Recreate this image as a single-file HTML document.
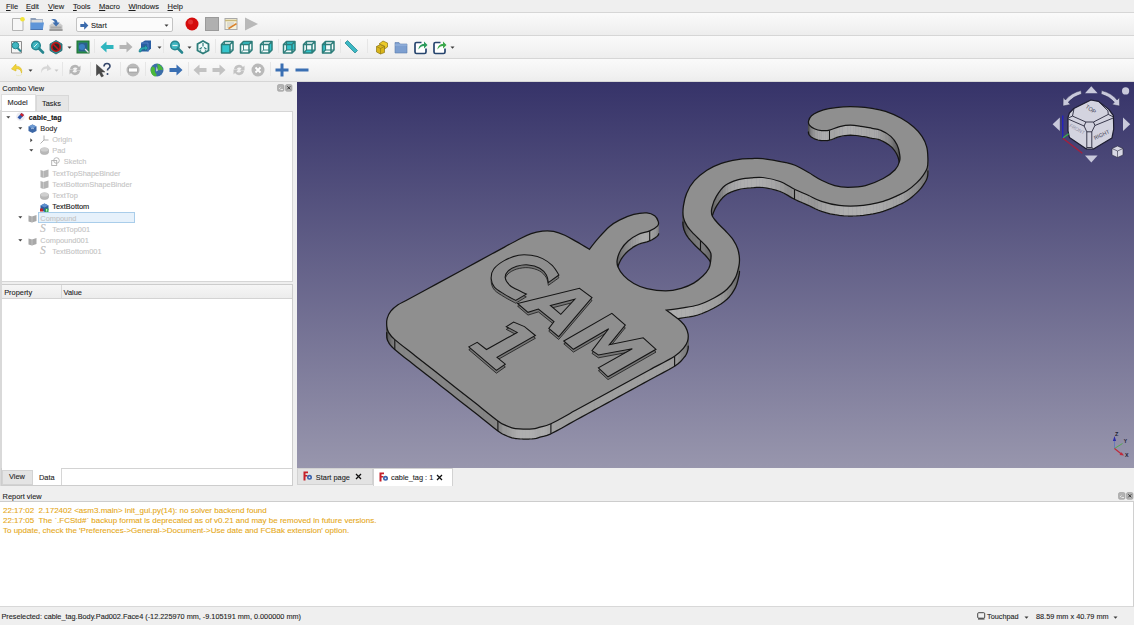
<!DOCTYPE html>
<html><head><meta charset="utf-8">
<style>
*{box-sizing:border-box;margin:0;padding:0}
html,body{width:1134px;height:625px;overflow:hidden;background:#efefef;font-family:"Liberation Sans",sans-serif;font-size:7.4px;color:#1e1e1e}
.a{position:absolute}
.t{position:absolute;white-space:pre;line-height:10px;-webkit-text-stroke:0.1px currentColor}
.u{text-decoration:underline;text-underline-offset:1.2px;text-decoration-thickness:0.6px}
svg{position:absolute;overflow:visible}
</style></head><body>

<div class="t" style="left:6px;top:1.8px;font-size:7.5px;color:#1e1e1e;font-weight:normal;"><span class="u">F</span>ile</div>
<div class="t" style="left:26px;top:1.8px;font-size:7.5px;color:#1e1e1e;font-weight:normal;"><span class="u">E</span>dit</div>
<div class="t" style="left:48px;top:1.8px;font-size:7.5px;color:#1e1e1e;font-weight:normal;"><span class="u">V</span>iew</div>
<div class="t" style="left:73px;top:1.8px;font-size:7.5px;color:#1e1e1e;font-weight:normal;"><span class="u">T</span>ools</div>
<div class="t" style="left:99px;top:1.8px;font-size:7.5px;color:#1e1e1e;font-weight:normal;"><span class="u">M</span>acro</div>
<div class="t" style="left:128.5px;top:1.8px;font-size:7.5px;color:#1e1e1e;font-weight:normal;"><span class="u">W</span>indows</div>
<div class="t" style="left:167.5px;top:1.8px;font-size:7.5px;color:#1e1e1e;font-weight:normal;"><span class="u">H</span>elp</div>
<div class="a" style="left:0px;top:13px;width:1134px;height:22px;background:linear-gradient(#fafafa,#f3f3f3 60%,#ededed)"></div>
<div class="a" style="left:0px;top:36px;width:1134px;height:22px;background:linear-gradient(#fafafa,#f3f3f3 60%,#ededed)"></div>
<div class="a" style="left:0px;top:59px;width:1134px;height:22px;background:linear-gradient(#fafafa,#f3f3f3 60%,#ededed)"></div>
<div class="a" style="left:0px;top:12px;width:1134px;height:1px;background:#d6d6d6"></div>
<div class="a" style="left:0px;top:35px;width:1134px;height:1px;background:#d6d6d6"></div>
<div class="a" style="left:0px;top:58px;width:1134px;height:1px;background:#d6d6d6"></div>
<div class="a" style="left:0px;top:81px;width:1134px;height:1px;background:#d6d6d6"></div>
<svg style="left:10.5px;top:17px" width="14" height="14" viewBox="0 0 14 14"><path d="M1.5,1.5h10.5v12h-10.5z" fill="#f7f7f7" stroke="#b4b4b4" stroke-width="1"/><circle cx="11.5" cy="2.3" r="2.3" fill="#f1e43a"/></svg>
<svg style="left:29.8px;top:17px" width="14" height="14" viewBox="0 0 14 14"><path d="M0.5,1h5l1,1.2h6.5v10.5h-12.5z" fill="#8e9fb8"/><path d="M1.5,3h11v3h-11z" fill="#dcdcdc"/><path d="M0.5,5.5h13.5l-1.2,7h-12.3z" fill="#5f95d8"/><path d="M0.5,12.5h12.3" stroke="#3d6aa8" stroke-width="0.8"/></svg>
<svg style="left:49px;top:17.5px" width="14" height="14" viewBox="0 0 14 14"><path d="M0.5,7.5l2,-2h9l2,2v5.5h-13z" fill="#c9c9c9"/><path d="M1.5,8.5h11v2h-11z" fill="#a9a9a9"/><path d="M0.5,11h13v2h-13z" fill="#9e9e9e"/><path d="M2,1.5c4,-1.5 6.5,0.5 6.5,3h2.2l-3.6,4l-3.6,-4h2.2c0,-1.5 -1.5,-2.5 -3.7,-3z" fill="#3f6fb0"/></svg>
<div class="a" style="left:76px;top:17px;width:97px;height:15px;background:#fbfbfb;border:1px solid #c3c3c3;border-radius:2px"></div>
<svg style="left:79.5px;top:20.5px" width="9" height="9" viewBox="0 0 14 14"><path d="M0.5,4.5h6v-4l6.5,6.5l-6.5,6.5v-4h-6z" fill="#3a6aab"/></svg>
<div class="t" style="left:91px;top:20.5px;font-size:7.5px;color:#1e1e1e;font-weight:normal;">Start</div>
<svg style="left:163.5px;top:23.5px" width="5" height="3" viewBox="0 0 5 3"><path d="M0.5,0.5h4l-2,2.3z" fill="#3b3b3b"/></svg>
<svg style="left:185px;top:17.3px" width="14" height="14" viewBox="0 0 14 14"><circle cx="7" cy="7" r="6.5" fill="#d40c0c"/><circle cx="5.5" cy="5" r="2.5" fill="#ee4a4a" opacity="0.6"/></svg>
<svg style="left:204.5px;top:17.3px" width="14" height="14" viewBox="0 0 14 14"><rect x="0.5" y="0.5" width="13" height="13" fill="#b0b0b0" stroke="#9a9a9a"/></svg>
<svg style="left:224px;top:17.3px" width="14" height="14" viewBox="0 0 14 14"><rect x="1" y="1.5" width="12" height="11" fill="#f6f2dc" stroke="#a9a9a9"/><path d="M1,3.5h12" stroke="#c9b87a" stroke-width="1.5"/><path d="M3,6h7M3,8h6M3,10h5" stroke="#bdbdbd" stroke-width="0.8"/><path d="M4,11l8,-5l1,1.2l-8,5z" fill="#d9822b"/></svg>
<svg style="left:244px;top:17.3px" width="14" height="14" viewBox="0 0 14 14"><path d="M1,0.5l13,6.5l-13,6.5z" fill="#b9b9b9"/></svg>
<svg style="left:10px;top:40px" width="14" height="14" viewBox="0 0 14 14"><path d="M1.5,1.5h10v11.5h-10z" fill="#f5f5f5" stroke="#8d8d8d" stroke-width="1"/><circle cx="5.5" cy="5.5" r="3.3" fill="#3fb6c1" stroke="#27868f" stroke-width="1"/><path d="M7.5,8l3.5,3.5" stroke="#27868f" stroke-width="2"/></svg>
<svg style="left:29.5px;top:40px" width="14" height="14" viewBox="0 0 14 14"><circle cx="6" cy="5.5" r="4.3" fill="#3fb6c1" stroke="#27868f" stroke-width="1.5"/><path d="M4,7l3.5,-3.5" stroke="#e0f4f4" stroke-width="1"/><path d="M9,8.5l4,4" stroke="#27868f" stroke-width="2.6" stroke-linecap="round"/></svg>
<svg style="left:49px;top:40px" width="14" height="14" viewBox="0 0 14 14"><path d="M7,0.5l6,3.5v6.5l-6,3.5l-6,-3.5v-6.5z" fill="#2f8c95" stroke="#1f5f66" stroke-width="0.8"/><circle cx="7" cy="7" r="4.2" fill="#2c2c2c" stroke="#c81414" stroke-width="1.6"/><path d="M4.3,4.3l5.4,5.4" stroke="#c81414" stroke-width="1.6"/></svg>
<svg style="left:67px;top:46px" width="5" height="3" viewBox="0 0 5 3"><path d="M0.5,0.5h4l-2,2.3z" fill="#3b3b3b"/></svg>
<svg style="left:76px;top:40px" width="14" height="14" viewBox="0 0 14 14"><rect x="1" y="1" width="12" height="12" fill="#2a9a4a" stroke="#1d6b34"/><rect x="2.5" y="2.5" width="9" height="9" fill="#2b5f8c"/><circle cx="6" cy="7" r="3" fill="#3a7fc0"/><path d="M9,9l3.5,3.5" stroke="#e8e8e8" stroke-width="1.2"/></svg>
<div class="a" style="left:94px;top:39px;width:1px;height:14px;background:#e6e6e6"></div>
<svg style="left:99.5px;top:40px" width="14" height="14" viewBox="0 0 14 14"><path d="M0.5,7l6,-5.5v3.5h7v4h-7v3.5z" fill="#2fb5be"/></svg>
<svg style="left:119px;top:40px" width="14" height="14" viewBox="0 0 14 14"><path d="M13.5,7l-6,-5.5v3.5h-7v4h7v3.5z" fill="#b5b5b5"/></svg>
<svg style="left:138px;top:40px" width="14" height="14" viewBox="0 0 14 14"><path d="M3,3l4,-2.5h6v8l-3,3h-7z" fill="#2a5ea3"/><path d="M3,3h7v9" fill="none" stroke="#5a8ccc" stroke-width="0.8"/><path d="M1,12c0,-4 3,-5 6,-5v-2l3,3l-3,3v-2c-2,0 -4,1 -4,3z" fill="#2aa4b0" stroke="#16707a" stroke-width="0.5"/></svg>
<svg style="left:156.5px;top:46px" width="5" height="3" viewBox="0 0 5 3"><path d="M0.5,0.5h4l-2,2.3z" fill="#3b3b3b"/></svg>
<div class="a" style="left:163px;top:39px;width:1px;height:14px;background:#e6e6e6"></div>
<svg style="left:169px;top:40px" width="14" height="14" viewBox="0 0 14 14"><circle cx="6" cy="5.5" r="4.3" fill="#3fb6c1" stroke="#27868f" stroke-width="1.5"/><path d="M3.5,5.5h5" stroke="#e0f4f4" stroke-width="1.2"/><path d="M9,8.5l4,4" stroke="#27868f" stroke-width="2.6" stroke-linecap="round"/></svg>
<svg style="left:186.5px;top:46px" width="5" height="3" viewBox="0 0 5 3"><path d="M0.5,0.5h4l-2,2.3z" fill="#3b3b3b"/></svg>
<svg style="left:196px;top:40px" width="14" height="14" viewBox="0 0 14 14"><path d="M7,1l5.5,3v6.5l-5.5,3l-5.5,-3v-6.5z" fill="#f2fbfb" stroke="#2d7d7a" stroke-width="1.8"/><path d="M7,3v3.5M3.5,9l2.5,-1.5M10.5,9l-2.5,-1.5" stroke="#2d7d7a" stroke-width="1.2"/><path d="M4,10.5l1.2,-0.6M10,10.5l-1.2,-0.6" stroke="#2d7d7a" stroke-width="1"/></svg>
<div class="a" style="left:215px;top:39px;width:1px;height:14px;background:#e6e6e6"></div>
<svg style="left:219.5px;top:40px" width="14" height="14" viewBox="0 0 14 14"><path d="M1.5,4.5l3,-3h8.5v8.5l-3,3h-8.5z" fill="#f2fbfb"/><path d="M4.5,1.5v8.5h8.5M4.5,10l-3,3" fill="none" stroke="#2d7d7a" stroke-width="0.9"/><path d="M1.5,4.5h8.5v8.5h-8.5z" fill="#35c5cc"/><path d="M1.5,4.5l3,-3h8.5v8.5l-3,3h-8.5z M1.5,4.5h8.5v8.5M10,4.5l3,-3" fill="none" stroke="#2d7d7a" stroke-width="1.5" stroke-linejoin="round"/></svg>
<svg style="left:239px;top:40px" width="14" height="14" viewBox="0 0 14 14"><path d="M1.5,4.5l3,-3h8.5v8.5l-3,3h-8.5z" fill="#f2fbfb"/><path d="M4.5,1.5v8.5h8.5M4.5,10l-3,3" fill="none" stroke="#2d7d7a" stroke-width="0.9"/><path d="M1.5,4.5l3,-3h8.5l-3,3z" fill="#35c5cc"/><path d="M1.5,4.5l3,-3h8.5v8.5l-3,3h-8.5z M1.5,4.5h8.5v8.5M10,4.5l3,-3" fill="none" stroke="#2d7d7a" stroke-width="1.5" stroke-linejoin="round"/></svg>
<svg style="left:258.5px;top:40px" width="14" height="14" viewBox="0 0 14 14"><path d="M1.5,4.5l3,-3h8.5v8.5l-3,3h-8.5z" fill="#f2fbfb"/><path d="M4.5,1.5v8.5h8.5M4.5,10l-3,3" fill="none" stroke="#2d7d7a" stroke-width="0.9"/><path d="M10,4.5l3,-3v8.5l-3,3z" fill="#35c5cc"/><path d="M1.5,4.5l3,-3h8.5v8.5l-3,3h-8.5z M1.5,4.5h8.5v8.5M10,4.5l3,-3" fill="none" stroke="#2d7d7a" stroke-width="1.5" stroke-linejoin="round"/></svg>
<div class="a" style="left:278px;top:39px;width:1px;height:14px;background:#e6e6e6"></div>
<svg style="left:282px;top:40px" width="14" height="14" viewBox="0 0 14 14"><path d="M1.5,4.5l3,-3h8.5v8.5l-3,3h-8.5z" fill="#f2fbfb"/><path d="M4.5,1.5h8.5v8.5h-8.5z" fill="#35c5cc"/><path d="M4.5,1.5v8.5h8.5M4.5,10l-3,3" fill="none" stroke="#2d7d7a" stroke-width="1.2"/><path d="M1.5,4.5l3,-3h8.5v8.5l-3,3h-8.5z M1.5,4.5h8.5v8.5M10,4.5l3,-3" fill="none" stroke="#2d7d7a" stroke-width="1.5" stroke-linejoin="round"/></svg>
<svg style="left:301.5px;top:40px" width="14" height="14" viewBox="0 0 14 14"><path d="M1.5,4.5l3,-3h8.5v8.5l-3,3h-8.5z" fill="#f2fbfb"/><path d="M1.5,13l3,-3h8.5l-3,3z" fill="#35c5cc"/><path d="M4.5,1.5v8.5h8.5M4.5,10l-3,3" fill="none" stroke="#2d7d7a" stroke-width="1.2"/><path d="M1.5,4.5l3,-3h8.5v8.5l-3,3h-8.5z M1.5,4.5h8.5v8.5M10,4.5l3,-3" fill="none" stroke="#2d7d7a" stroke-width="1.5" stroke-linejoin="round"/></svg>
<svg style="left:321px;top:40px" width="14" height="14" viewBox="0 0 14 14"><path d="M1.5,4.5l3,-3h8.5v8.5l-3,3h-8.5z" fill="#f2fbfb"/><path d="M1.5,4.5l3,-3v8.5l-3,3z" fill="#35c5cc"/><path d="M4.5,1.5v8.5h8.5M4.5,10l-3,3" fill="none" stroke="#2d7d7a" stroke-width="1.2"/><path d="M1.5,4.5l3,-3h8.5v8.5l-3,3h-8.5z M1.5,4.5h8.5v8.5M10,4.5l3,-3" fill="none" stroke="#2d7d7a" stroke-width="1.5" stroke-linejoin="round"/></svg>
<div class="a" style="left:340px;top:39px;width:1px;height:14px;background:#e6e6e6"></div>
<svg style="left:344px;top:40px" width="14" height="14" viewBox="0 0 14 14"><path d="M1,3l2.5,-2.5l10,10l-2.5,2.5z" fill="#3cb8c4" stroke="#2a8a94" stroke-width="0.8"/></svg>
<div class="a" style="left:367px;top:39px;width:1px;height:14px;background:#e6e6e6"></div>
<svg style="left:374.5px;top:40px" width="14" height="14" viewBox="0 0 14 14"><path d="M1.5,6.5l4,-2l4,2v6l-4,1.5l-4,-2z" fill="#d9b51a" stroke="#8c7514" stroke-width="0.7"/><path d="M4,4l4,-3l4.5,2v4l-3,2v-3z" fill="#eccb2a" stroke="#8c7514" stroke-width="0.7"/><path d="M1.5,6.5l4,2l4,-2M5.5,8.5v5.5" fill="none" stroke="#8c7514" stroke-width="0.6"/></svg>
<svg style="left:393.5px;top:40px" width="14" height="14" viewBox="0 0 14 14"><path d="M1,2.5h4l1,1.5h7v9h-12z" fill="#7d9fd0" stroke="#5c7cad" stroke-width="0.6"/><path d="M1,5h12" stroke="#a6c0e4" stroke-width="0.8"/></svg>
<svg style="left:413.5px;top:40px" width="14" height="14" viewBox="0 0 14 14"><path d="M7.5,2.5h-5a1.5,1.5 0 0 0 -1.5,1.5v8a1.5,1.5 0 0 0 1.5,1.5h8a1.5,1.5 0 0 0 1.5,-1.5v-3.5" fill="#ffffff" stroke="#27456e" stroke-width="1.7"/><path d="M4.5,9.5c0,-3 2,-5.5 5.5,-5.5v-2.5l3.5,3.5l-3.5,3.5v-2.5c-2,0 -4,1 -5.5,3.5z" fill="#2a9a5a"/></svg>
<svg style="left:433px;top:40px" width="14" height="14" viewBox="0 0 14 14"><path d="M7.5,2.5h-5a1.5,1.5 0 0 0 -1.5,1.5v8a1.5,1.5 0 0 0 1.5,1.5h8a1.5,1.5 0 0 0 1.5,-1.5v-3.5" fill="#ffffff" stroke="#27456e" stroke-width="1.7"/><path d="M4.5,9.5c0,-3 2,-5.5 5.5,-5.5v-2.5l3.5,3.5l-3.5,3.5v-2.5c-2,0 -4,1 -5.5,3.5z" fill="#3aa84a"/></svg>
<svg style="left:450px;top:46px" width="5" height="3" viewBox="0 0 5 3"><path d="M0.5,0.5h4l-2,2.3z" fill="#3b3b3b"/></svg>
<svg style="left:10.5px;top:63px" width="14" height="14" viewBox="0 0 14 14"><path d="M4,2l-3.5,4l4.5,2v-2.3c3,0 5,1 5.5,4.5c1,-4 -1,-7 -5.5,-7v-2z" fill="#f1d33a" stroke="#d9b820" stroke-width="0.6"/><path d="M5,12c2,1 5,1 6,-1" stroke="#e9e9c9" stroke-width="1" fill="none"/></svg>
<svg style="left:27.5px;top:69px" width="5" height="3" viewBox="0 0 5 3"><path d="M0.5,0.5h4l-2,2.3z" fill="#3b3b3b"/></svg>
<svg style="left:37.5px;top:63px" width="14" height="14" viewBox="0 0 14 14"><path d="M10,2l3.5,4l-4.5,2v-2.3c-3,0 -5,1 -5.5,4.5c-1,-4 1,-7 5.5,-7v-2z" fill="#d6d6d6"/></svg>
<svg style="left:54px;top:69px" width="5" height="3" viewBox="0 0 5 3"><path d="M0.5,0.5h4l-2,2.3z" fill="#c8c8c8"/></svg>
<div class="a" style="left:62px;top:62px;width:1px;height:14px;background:#e6e6e6"></div>
<svg style="left:67.5px;top:63px" width="14" height="14" viewBox="0 0 14 14"><path d="M2,6a5,5 0 0 1 9,-2l1.5,-1.5v5h-5l2,-2a3,3 0 0 0 -5,1z" fill="#b5b5b5"/><path d="M12,8a5,5 0 0 1 -9,2l-1.5,1.5v-5h5l-2,2a3,3 0 0 0 5,-1z" fill="#b5b5b5"/></svg>
<div class="a" style="left:90px;top:62px;width:1px;height:14px;background:#e6e6e6"></div>
<svg style="left:96px;top:63px" width="14" height="14" viewBox="0 0 14 14"><path d="M0.5,1.5l0,11l2.8,-2.5l2.2,4l2,-1l-2.2,-4h3.6z" fill="#4a4a4a" stroke="#3a3a3a" stroke-width="0.5"/><path d="M8,3.5c0,-2 1.5,-3 3,-3s3,1 3,2.8c0,1.5 -1.2,2 -2,2.6c-0.5,0.4 -0.5,0.8 -0.5,1.6" fill="none" stroke="#34466a" stroke-width="1.6"/><circle cx="11.5" cy="11" r="1" fill="#34466a"/></svg>
<div class="a" style="left:120px;top:62px;width:1px;height:14px;background:#e6e6e6"></div>
<svg style="left:125.5px;top:63px" width="14" height="14" viewBox="0 0 14 14"><circle cx="7" cy="7" r="6.5" fill="#b9b9b9"/><rect x="2.5" y="5" width="9" height="4" fill="#ffffff" stroke="#8c8c8c" stroke-width="0.6"/></svg>
<div class="a" style="left:145px;top:62px;width:1px;height:14px;background:#e6e6e6"></div>
<svg style="left:149.5px;top:63px" width="14" height="14" viewBox="0 0 14 14"><circle cx="7" cy="7" r="6.5" fill="#3c6ea8"/><path d="M2,3.5c2,0 3.5,1.5 3,3.5c-0.5,1.5 0.5,3 1.5,4c0.5,1 -0.5,2.5 -1.5,2.5c-3,-1 -5,-4.5 -4,-8zM7,0.8c3,0.5 5.5,3 6,6c-1,0.5 -2,-0.5 -3,0c-1,1 -2.5,0.5 -2.5,-1c0,-1.5 0.5,-2.5 -0.5,-5z" fill="#4ab83a"/><path d="M6.5,3.5l1.5,4l-2,1z" fill="#e8f0e8" opacity="0.8"/></svg>
<svg style="left:169px;top:63px" width="14" height="14" viewBox="0 0 14 14"><path d="M13.5,7l-6,-5.5v3.5h-7v4h7v3.5z" fill="#3a6fb3"/></svg>
<div class="a" style="left:188px;top:62px;width:1px;height:14px;background:#e6e6e6"></div>
<svg style="left:192.5px;top:63px" width="14" height="14" viewBox="0 0 14 14"><path d="M0.5,7l6,-5.5v3.5h7v4h-7v3.5z" fill="#c2c2c2"/></svg>
<svg style="left:211.5px;top:63px" width="14" height="14" viewBox="0 0 14 14"><path d="M13.5,7l-6,-5.5v3.5h-7v4h7v3.5z" fill="#c2c2c2"/></svg>
<svg style="left:231.5px;top:63px" width="14" height="14" viewBox="0 0 14 14"><path d="M2,6a5,5 0 0 1 9,-2l1.5,-1.5v5h-5l2,-2a3,3 0 0 0 -5,1z" fill="#c2c2c2"/><path d="M12,8a5,5 0 0 1 -9,2l-1.5,1.5v-5h5l-2,2a3,3 0 0 0 5,-1z" fill="#c2c2c2"/></svg>
<svg style="left:251px;top:63px" width="14" height="14" viewBox="0 0 14 14"><circle cx="7" cy="7" r="6.5" fill="#b9b9b9"/><path d="M4.5,4.5l5,5M9.5,4.5l-5,5" stroke="#ffffff" stroke-width="1.8"/></svg>
<div class="a" style="left:270px;top:62px;width:1px;height:14px;background:#e6e6e6"></div>
<svg style="left:274.5px;top:63px" width="14" height="14" viewBox="0 0 14 14"><path d="M5.5,0.5h3v5h5v3h-5v5h-3v-5h-5v-3h5z" fill="#3a6fb3"/></svg>
<svg style="left:294.5px;top:63px" width="14" height="14" viewBox="0 0 14 14"><path d="M0.5,5.5h13v3h-13z" fill="#3a6fb3"/></svg>
<div class="t" style="left:2.3px;top:83.6px;font-size:7.4px;color:#1e1e1e;font-weight:normal;">Combo View</div>
<svg style="left:277px;top:84px" width="16" height="8" viewBox="0 0 16 8"><rect x="0.5" y="0.5" width="6.5" height="6.8" rx="1.5" fill="#b3b3b3" stroke="#9c9c9c" stroke-width="0.6"/><path d="M2,5l1.5,-1.5M3.5,5.5h2.5" stroke="#f4f4f4" stroke-width="0.8" fill="none"/><rect x="8.5" y="0.5" width="6.5" height="6.8" rx="1.5" fill="#b3b3b3" stroke="#9c9c9c" stroke-width="0.6"/><path d="M10.3,2.3l3,3M13.3,2.3l-3,3" stroke="#2a2a2a" stroke-width="0.9"/></svg>
<div class="a" style="left:1px;top:110.5px;width:292px;height:171.5px;background:#fff;border:1px solid #d6d6d6"></div>
<div class="a" style="left:35.5px;top:95px;width:33px;height:16px;background:#e6e6e6;border:1px solid #d8d8d8;border-bottom:none"></div>
<div class="a" style="left:1px;top:93.8px;width:34.5px;height:17.2px;background:#fff;border:1px solid #dedede;border-bottom:none"></div>
<div class="t" style="left:7.5px;top:98.1px;font-size:7.4px;color:#1e1e1e;font-weight:normal;">Model</div>
<div class="t" style="left:42px;top:98.6px;font-size:7.4px;color:#1e1e1e;font-weight:normal;">Tasks</div>
<svg style="left:5.8px;top:115.5px" width="5" height="3" viewBox="0 0 5 3"><path d="M0.3,0.3h4l-2,2.2z" fill="#404040"/></svg>
<svg style="left:16px;top:112px" width="9" height="9" viewBox="0 0 9 9"><circle cx="4.5" cy="4.5" r="4.3" fill="#ececf2"/><path d="M5.5,1l2.5,2l-4,4.5l-2.5,-2z" fill="#2f56a8"/><path d="M5.5,1l2.5,2l-1.5,1.7l-2.5,-2z" fill="#d2242a"/></svg>
<div class="t" style="left:28.8px;top:113.0px;font-size:7.1px;color:#111;font-weight:bold;">cable_tag</div>
<svg style="left:17.5px;top:126.5px" width="5" height="3" viewBox="0 0 5 3"><path d="M0.3,0.3h4l-2,2.2z" fill="#404040"/></svg>
<svg style="left:28px;top:123.5px" width="9" height="9" viewBox="0 0 9 9"><path d="M4.5,0.5l4,2v4.5l-4,2l-4,-2v-4.5z" fill="#3c67a6"/><path d="M4.5,0.5l4,2l-4,2l-4,-2z" fill="#6e9ad2"/><path d="M3,5c1,-1 2,-1 3,0" stroke="#c9daf0" stroke-width="0.8" fill="none"/></svg>
<div class="t" style="left:40.3px;top:123.7px;font-size:7.4px;color:#1e1e1e;font-weight:normal;">Body</div>
<svg style="left:30px;top:137.5px" width="3" height="5" viewBox="0 0 3 5"><path d="M0.3,0.3v4l2.2,-2z" fill="#404040"/></svg>
<svg style="left:39.5px;top:134.5px" width="9" height="9" viewBox="0 0 9 9"><path d="M4,0.5v4.5l-3.5,3.5M4,5h4.5" stroke="#a8a8a8" stroke-width="0.9" fill="none"/></svg>
<div class="t" style="left:52.3px;top:134.9px;font-size:7.4px;color:#c3c3c3;font-weight:normal;">Origin</div>
<svg style="left:29.3px;top:149px" width="5" height="3" viewBox="0 0 5 3"><path d="M0.3,0.3h4l-2,2.2z" fill="#404040"/></svg>
<svg style="left:39.5px;top:147px" width="9" height="8" viewBox="0 0 9 8"><ellipse cx="4.5" cy="2.5" rx="4" ry="2" fill="#b8b8b8"/><path d="M0.5,2.5v3c0,1.2 1.8,2 4,2s4,-0.8 4,-2v-3" fill="#b8b8b8" stroke="#9c9c9c" stroke-width="0.5"/><ellipse cx="4.5" cy="2.5" rx="4" ry="2" fill="#cfcfcf"/></svg>
<div class="t" style="left:52.3px;top:146.1px;font-size:7.4px;color:#c3c3c3;font-weight:normal;">Pad</div>
<svg style="left:51px;top:157px" width="9" height="9" viewBox="0 0 9 9"><rect x="0.7" y="3.5" width="5" height="5" fill="none" stroke="#b0b0b0" stroke-width="0.9"/><circle cx="5.5" cy="3.5" r="2.8" fill="none" stroke="#b0b0b0" stroke-width="0.9"/></svg>
<div class="t" style="left:63.8px;top:157.4px;font-size:7.4px;color:#c3c3c3;font-weight:normal;">Sketch</div>
<svg style="left:39.5px;top:168.5px" width="9" height="9" viewBox="0 0 9 9"><path d="M0.5,1l3,1l5,-1.5v7l-5,1.5l-3,-1z" fill="#b4b4b4"/><path d="M3.5,2v7" stroke="#d8d8d8" stroke-width="0.6"/></svg>
<div class="t" style="left:52.3px;top:168.6px;font-size:7.4px;color:#c3c3c3;font-weight:normal;">TextTopShapeBinder</div>
<svg style="left:39.5px;top:179.8px" width="9" height="9" viewBox="0 0 9 9"><path d="M0.5,1l3,1l5,-1.5v7l-5,1.5l-3,-1z" fill="#b4b4b4"/><path d="M3.5,2v7" stroke="#d8d8d8" stroke-width="0.6"/></svg>
<div class="t" style="left:52.3px;top:179.9px;font-size:7.4px;color:#c3c3c3;font-weight:normal;">TextBottomShapeBinder</div>
<svg style="left:39.5px;top:192px" width="9" height="8" viewBox="0 0 9 8"><ellipse cx="4.5" cy="2.5" rx="4" ry="2" fill="#b8b8b8"/><path d="M0.5,2.5v3c0,1.2 1.8,2 4,2s4,-0.8 4,-2v-3" fill="#b8b8b8" stroke="#9c9c9c" stroke-width="0.5"/><ellipse cx="4.5" cy="2.5" rx="4" ry="2" fill="#cfcfcf"/></svg>
<div class="t" style="left:52.3px;top:191.1px;font-size:7.4px;color:#c3c3c3;font-weight:normal;">TextTop</div>
<svg style="left:39.5px;top:202.5px" width="9" height="9" viewBox="0 0 9 9"><path d="M4.5,0.5l4,2v4.5l-4,2l-4,-2v-4.5z" fill="#2f5f9e"/><path d="M4.5,0.5l4,2l-4,2l-4,-2z" fill="#5d8fcf"/><rect x="0" y="5.5" width="3" height="3" fill="#c0272d"/><path d="M5,5.5h3.5v3.5h-3.5z" fill="#2fa84a"/><path d="M6.7,6v2.5" stroke="#fff" stroke-width="0.8"/></svg>
<div class="t" style="left:52.3px;top:202.4px;font-size:7.4px;color:#111;font-weight:normal;">TextBottom</div>
<svg style="left:17.5px;top:216.3px" width="5" height="3" viewBox="0 0 5 3"><path d="M0.3,0.3h4l-2,2.2z" fill="#404040"/></svg>
<svg style="left:28px;top:214px" width="9" height="8" viewBox="0 0 9 8"><path d="M0.5,1.5l3.5,1l4.5,-1.5v6l-4.5,1.5l-3.5,-1z" fill="#a8a8a8"/><path d="M4,2.5v6" stroke="#d0d0d0" stroke-width="0.6"/></svg>
<div class="a" style="left:38.3px;top:212.4px;width:97px;height:11px;background:#e6f1fb;border:1px solid #a9cdea"></div>
<div class="t" style="left:40.3px;top:213.6px;font-size:7.4px;color:#c3c3c3;font-weight:normal;">Compound</div>
<div class="t" style="left:40px;top:222.9px;font-size:11.5px;color:#bdbdbd;font-weight:normal;font-family:'Liberation Serif';font-style:italic">S</div>
<div class="t" style="left:52.3px;top:224.9px;font-size:7.4px;color:#c3c3c3;font-weight:normal;">TextTop001</div>
<svg style="left:17.5px;top:238.8px" width="5" height="3" viewBox="0 0 5 3"><path d="M0.3,0.3h4l-2,2.2z" fill="#404040"/></svg>
<svg style="left:28px;top:236.5px" width="9" height="8" viewBox="0 0 9 8"><path d="M0.5,1.5l3.5,1l4.5,-1.5v6l-4.5,1.5l-3.5,-1z" fill="#a8a8a8"/><path d="M4,2.5v6" stroke="#d0d0d0" stroke-width="0.6"/></svg>
<div class="t" style="left:40.3px;top:236.1px;font-size:7.4px;color:#c3c3c3;font-weight:normal;">Compound001</div>
<div class="t" style="left:40px;top:245.4px;font-size:11.5px;color:#bdbdbd;font-weight:normal;font-family:'Liberation Serif';font-style:italic">S</div>
<div class="t" style="left:52.3px;top:247.4px;font-size:7.4px;color:#c3c3c3;font-weight:normal;">TextBottom001</div>
<div class="a" style="left:1px;top:283.5px;width:292px;height:185px;background:#fff;border:1px solid #cdcdcd"></div>
<div class="a" style="left:2px;top:284.5px;width:290px;height:14px;background:linear-gradient(#f6f6f6,#ececec);border-bottom:1px solid #d3d3d3"></div>
<div class="a" style="left:61px;top:285px;width:1px;height:13px;background:#d9d9d9"></div>
<div class="a" style="left:0px;top:110px;width:2px;height:376px;background:#d9d9d9"></div>
<div class="t" style="left:4.2px;top:288.1px;font-size:7.4px;color:#1e1e1e;font-weight:normal;">Property</div>
<div class="t" style="left:63.5px;top:288.1px;font-size:7.4px;color:#1e1e1e;font-weight:normal;">Value</div>
<div class="a" style="left:1px;top:468px;width:292px;height:18px;background:#fff;border:1px solid #cdcdcd;border-top:none"></div>
<div class="a" style="left:1.5px;top:469.5px;width:31px;height:15px;background:#e4e4e4;border:1px solid #d3d3d3"></div>
<div class="a" style="left:60.8px;top:468.5px;width:1px;height:16px;background:#d6d6d6"></div>
<div class="a" style="left:61px;top:467.5px;width:231px;height:1px;background:#d3d3d3"></div>
<div class="t" style="left:9px;top:472.1px;font-size:7.4px;color:#1e1e1e;font-weight:normal;">View</div>
<div class="t" style="left:39px;top:473.1px;font-size:7.4px;color:#1e1e1e;font-weight:normal;">Data</div>
<div class="a" style="left:297px;top:82px;width:837px;height:386px;background:linear-gradient(#363369,#9896ad)"></div>
<svg width="1134" height="625" style="left:0;top:0;position:absolute" viewBox="0 0 1134 625">
<defs><path id="ol" d="M386.8,326.4 C386.6,324.1 386.5,320.9 387.2,318.4 C387.9,315.9 389.0,313.5 390.8,311.2 C392.6,308.9 395.1,306.8 398.0,304.8 C400.9,302.8 402.0,302.7 408.4,299.3 C414.8,295.9 427.0,289.2 436.3,284.1 C445.6,279.1 454.9,274.1 464.2,269.0 C473.5,263.9 482.8,258.9 492.1,253.8 C501.4,248.8 513.5,242.1 520.0,238.7 C526.5,235.3 527.5,234.9 531.2,233.6 C534.9,232.3 538.7,231.5 542.4,231.1 C546.1,230.7 549.9,230.7 553.6,231.4 C557.3,232.1 561.1,233.6 564.8,235.3 C568.5,237.0 571.9,239.1 576.0,241.4 C580.1,243.7 589.4,249.3 589.4,249.3 C589.4,249.3 595.0,241.9 598.4,238.1 C601.8,234.3 606.1,229.5 609.6,226.5 C613.1,223.5 615.4,222.1 619.4,220.1 C623.4,218.1 629.2,215.6 633.8,214.4 C638.4,213.2 643.3,212.7 646.8,212.9 C650.3,213.1 652.8,214.4 654.7,215.8 C656.6,217.2 657.8,219.9 658.3,221.6 C658.8,223.3 659.0,224.3 657.6,225.9 C656.2,227.5 653.0,229.5 649.7,230.9 C646.5,232.3 641.7,232.8 638.1,234.5 C634.5,236.2 631.0,238.5 628.1,241.0 C625.2,243.5 622.7,246.6 620.9,249.7 C619.1,252.8 617.7,256.9 617.2,259.8 C616.7,262.7 616.9,264.4 618.0,267.0 C619.1,269.6 621.1,272.9 623.7,275.6 C626.3,278.4 629.9,281.3 633.8,283.5 C637.6,285.7 641.5,287.4 646.8,288.6 C652.1,289.8 659.9,290.9 665.6,290.9 C671.3,290.8 676.5,289.6 681.2,288.3 C685.9,287.0 690.1,285.2 693.7,283.1 C697.4,281.0 700.6,278.2 703.1,275.8 C705.6,273.4 707.5,270.9 708.8,268.5 C710.0,266.1 710.3,264.1 710.6,261.5 C710.9,258.9 711.5,255.7 710.8,253.2 C710.1,250.7 708.1,248.6 706.4,246.5 C704.7,244.4 702.9,243.0 700.8,240.9 C698.7,238.8 696.2,236.6 694.0,234.2 C691.8,231.8 689.1,229.2 687.3,226.4 C685.5,223.6 684.0,220.8 683.4,217.4 C682.8,214.0 682.8,210.2 683.4,206.2 C684.0,202.2 684.9,197.4 686.7,193.2 C688.5,188.9 691.0,184.5 694.4,180.7 C697.8,176.9 702.4,173.1 706.9,170.2 C711.4,167.3 716.2,165.2 721.3,163.4 C726.4,161.6 732.5,160.4 737.6,159.6 C742.7,158.8 747.8,158.8 752.0,158.6 C756.2,158.4 757.2,157.9 762.9,158.6 C768.5,159.3 780.5,161.5 785.9,162.6 C791.2,163.7 791.3,163.7 795.0,165.3 C798.7,166.9 803.8,169.8 808.2,172.3 C812.6,174.8 817.1,178.1 821.5,180.3 C825.9,182.5 830.3,184.4 834.7,185.6 C839.1,186.8 842.8,187.3 847.9,187.3 C853.0,187.3 859.6,187.1 865.5,185.6 C871.4,184.1 878.3,181.1 883.2,178.5 C888.1,175.9 892.4,172.7 895.1,169.8 C897.8,166.9 898.9,163.7 899.6,161.1 C900.4,158.5 900.0,156.8 899.6,154.1 C899.2,151.4 898.5,147.6 897.0,144.7 C895.5,141.8 893.6,138.8 890.8,136.4 C888.0,134.0 883.5,131.5 880.4,130.2 C877.3,128.8 875.2,129.0 872.0,128.3 C868.8,127.7 864.8,126.8 861.2,126.3 C857.6,125.8 854.0,125.2 850.4,125.2 C846.8,125.2 843.1,125.8 839.6,126.6 C836.1,127.4 832.5,129.5 829.5,130.2 C826.5,130.9 824.1,130.8 821.6,130.6 C819.1,130.4 816.4,129.7 814.4,128.8 C812.4,127.9 810.4,126.5 809.4,125.2 C808.4,123.9 808.2,122.5 808.6,120.9 C809.0,119.3 809.9,117.3 811.5,115.8 C813.1,114.3 815.1,113.1 818.0,111.9 C820.9,110.7 824.6,109.4 828.8,108.6 C833.0,107.8 838.4,107.1 843.2,106.8 C848.0,106.5 852.8,106.5 857.6,106.8 C862.4,107.0 867.3,107.5 872.0,108.3 C876.7,109.1 880.7,109.8 885.6,111.4 C890.5,113.1 896.5,115.6 901.2,118.2 C905.9,120.8 910.2,124.0 913.7,127.0 C917.2,130.0 919.8,133.1 922.0,136.4 C924.2,139.7 925.7,143.2 926.7,146.8 C927.7,150.4 927.8,154.7 927.9,158.2 C928.0,161.7 928.1,165.0 927.2,167.9 C926.4,170.8 924.6,173.3 922.8,175.8 C921.0,178.3 919.2,180.4 916.6,182.9 C914.0,185.4 910.3,188.6 906.9,190.8 C903.5,193.0 900.3,194.3 896.4,196.1 C892.5,197.8 887.6,199.9 883.2,201.3 C878.8,202.7 874.4,203.6 870.0,204.4 C865.6,205.2 861.9,205.7 856.7,205.9 C851.6,206.1 845.0,206.2 839.1,205.4 C833.2,204.7 826.6,203.1 821.5,201.4 C816.4,199.7 812.6,197.3 808.2,195.3 C803.8,193.3 799.7,191.8 795.0,189.5 C790.3,187.2 785.5,183.5 780.1,181.5 C774.8,179.5 767.7,178.1 762.9,177.5 C758.1,176.9 755.3,177.5 751.1,177.9 C746.9,178.3 741.9,178.5 737.6,179.8 C733.3,181.1 728.6,182.8 725.1,185.5 C721.6,188.2 718.7,192.5 716.5,196.1 C714.3,199.7 712.8,204.1 712.0,207.3 C711.2,210.5 711.1,212.6 712.0,215.2 C712.9,217.8 715.4,220.4 717.6,223.0 C719.8,225.6 722.8,228.0 725.4,230.8 C728.0,233.6 731.2,236.8 733.2,239.8 C735.2,242.8 736.7,245.8 737.7,248.8 C738.7,251.8 739.2,254.9 739.4,257.7 C739.6,260.5 739.7,262.0 739.0,265.4 C738.3,268.8 737.3,273.9 735.3,277.9 C733.3,281.9 730.5,286.0 727.0,289.3 C723.5,292.6 719.4,295.1 714.5,297.7 C709.6,300.3 703.4,303.3 697.9,305.0 C692.4,306.7 686.5,307.2 681.2,308.1 C676.0,309.0 666.4,310.2 666.4,310.2 C666.4,310.2 671.1,313.7 673.5,315.5 C675.9,317.3 678.8,319.3 680.8,321.2 C682.8,323.1 684.3,324.7 685.5,326.9 C686.7,329.1 687.8,331.8 688.1,334.2 C688.4,336.6 688.2,339.1 687.5,341.4 C686.8,343.6 686.0,345.2 683.9,347.7 C681.8,350.2 680.3,352.5 674.6,356.2 C668.9,359.9 658.1,365.2 649.9,369.7 C641.6,374.2 633.4,378.7 625.1,383.2 C616.9,387.7 608.6,392.3 600.4,396.8 C592.1,401.3 583.9,405.8 575.6,410.3 C567.4,414.8 556.8,421.0 550.9,423.8 C545.0,426.6 543.1,426.4 540.0,427.2 C536.9,428.0 535.9,428.6 532.5,428.9 C529.1,429.2 522.8,429.1 519.4,428.9 C516.0,428.7 514.4,428.5 511.9,427.8 C509.4,427.1 506.8,426.0 504.5,424.9 C502.2,423.8 502.4,424.3 497.9,420.9 C493.4,417.5 484.2,410.1 477.3,404.6 C470.4,399.2 463.5,393.8 456.7,388.4 C449.8,383.0 442.9,377.5 436.0,372.1 C429.2,366.7 422.3,361.3 415.4,355.9 C408.5,350.4 399.3,343.6 394.8,339.6 C390.3,335.6 389.7,334.2 388.4,332.0 C387.1,329.8 387.0,328.7 386.8,326.4Z"/></defs>
<g><path d="M386.8,326.4L386.7,324.6L386.7,334.6L386.8,336.4Z" fill="#4e4e4e" stroke="#4e4e4e" stroke-width="0.6"/><path d="M386.7,324.6L386.7,322.5L386.7,332.5L386.7,334.6Z" fill="#4e4e4e" stroke="#4e4e4e" stroke-width="0.6"/><path d="M658.7,223.8L658.4,224.8L658.4,234.8L658.7,233.8Z" fill="#696969" stroke="#696969" stroke-width="0.6"/><path d="M658.4,224.8L657.6,225.9L657.6,235.9L658.4,234.8Z" fill="#7d7d7d" stroke="#7d7d7d" stroke-width="0.6"/><path d="M657.6,225.9L656.2,227.1L656.2,237.1L657.6,235.9Z" fill="#8e8e8e" stroke="#8e8e8e" stroke-width="0.6"/><path d="M656.2,227.1L654.3,228.4L654.3,238.4L656.2,237.1Z" fill="#979797" stroke="#979797" stroke-width="0.6"/><path d="M654.3,228.4L652.1,229.7L652.1,239.7L654.3,238.4Z" fill="#9c9c9c" stroke="#9c9c9c" stroke-width="0.6"/><path d="M652.1,229.7L649.7,230.9L649.7,240.9L652.1,239.7Z" fill="#a1a1a1" stroke="#a1a1a1" stroke-width="0.6"/><path d="M649.7,230.9L647.0,231.8L647.0,241.8L649.7,240.9Z" fill="#a7a7a7" stroke="#a7a7a7" stroke-width="0.6"/><path d="M647.0,231.8L644.0,232.6L644.0,242.6L647.0,241.8Z" fill="#ababab" stroke="#ababab" stroke-width="0.6"/><path d="M644.0,232.6L641.0,233.4L641.0,243.4L644.0,242.6Z" fill="#aaaaaa" stroke="#aaaaaa" stroke-width="0.6"/><path d="M641.0,233.4L638.1,234.5L638.1,244.5L641.0,243.4Z" fill="#a6a6a6" stroke="#a6a6a6" stroke-width="0.6"/><path d="M638.1,234.5L635.4,235.9L635.4,245.9L638.1,244.5Z" fill="#a0a0a0" stroke="#a0a0a0" stroke-width="0.6"/><path d="M635.4,235.9L632.8,237.4L632.8,247.4L635.4,245.9Z" fill="#9b9b9b" stroke="#9b9b9b" stroke-width="0.6"/><path d="M632.8,237.4L630.4,239.2L630.4,249.2L632.8,247.4Z" fill="#979797" stroke="#979797" stroke-width="0.6"/><path d="M630.4,239.2L628.1,241.0L628.1,251.0L630.4,249.2Z" fill="#919191" stroke="#919191" stroke-width="0.6"/><path d="M628.1,241.0L626.0,243.0L626.0,253.0L628.1,251.0Z" fill="#8b8b8b" stroke="#8b8b8b" stroke-width="0.6"/><path d="M626.0,243.0L624.1,245.1L624.1,255.1L626.0,253.0Z" fill="#858585" stroke="#858585" stroke-width="0.6"/><path d="M624.1,245.1L622.4,247.4L622.4,257.4L624.1,255.1Z" fill="#7f7f7f" stroke="#7f7f7f" stroke-width="0.6"/><path d="M622.4,247.4L620.9,249.7L620.9,259.7L622.4,257.4Z" fill="#7a7a7a" stroke="#7a7a7a" stroke-width="0.6"/><path d="M620.9,249.7L619.6,252.2L619.6,262.2L620.9,259.7Z" fill="#737373" stroke="#737373" stroke-width="0.6"/><path d="M619.6,252.2L618.5,254.8L618.5,264.8L619.6,262.2Z" fill="#6e6e6e" stroke="#6e6e6e" stroke-width="0.6"/><path d="M618.5,254.8L617.7,257.4L617.7,267.4L618.5,264.8Z" fill="#6a6a6a" stroke="#6a6a6a" stroke-width="0.6"/><path d="M617.7,257.4L617.2,259.8L617.2,269.8L617.7,267.4Z" fill="#676767" stroke="#676767" stroke-width="0.6"/><path d="M617.2,259.8L617.0,261.8L617.0,271.8L617.2,269.8Z" fill="#656565" stroke="#656565" stroke-width="0.6"/><path d="M711.1,255.2L710.8,253.2L710.8,263.2L711.1,265.2Z" fill="#505050" stroke="#505050" stroke-width="0.6"/><path d="M710.8,253.2L710.1,251.4L710.1,261.4L710.8,263.2Z" fill="#5a5a5a" stroke="#5a5a5a" stroke-width="0.6"/><path d="M710.1,251.4L709.0,249.7L709.0,259.7L710.1,261.4Z" fill="#676767" stroke="#676767" stroke-width="0.6"/><path d="M709.0,249.7L707.7,248.1L707.7,258.1L709.0,259.7Z" fill="#6f6f6f" stroke="#6f6f6f" stroke-width="0.6"/><path d="M707.7,248.1L706.4,246.5L706.4,256.5L707.7,258.1Z" fill="#717171" stroke="#717171" stroke-width="0.6"/><path d="M706.4,246.5L705.1,245.0L705.1,255.0L706.4,256.5Z" fill="#757575" stroke="#757575" stroke-width="0.6"/><path d="M705.1,245.0L703.7,243.7L703.7,253.7L705.1,255.0Z" fill="#7a7a7a" stroke="#7a7a7a" stroke-width="0.6"/><path d="M703.7,243.7L702.3,242.4L702.3,252.4L703.7,253.7Z" fill="#7d7d7d" stroke="#7d7d7d" stroke-width="0.6"/><path d="M702.3,242.4L700.8,240.9L700.8,250.9L702.3,252.4Z" fill="#7c7c7c" stroke="#7c7c7c" stroke-width="0.6"/><path d="M700.8,240.9L699.2,239.3L699.2,249.3L700.8,250.9Z" fill="#7b7b7b" stroke="#7b7b7b" stroke-width="0.6"/><path d="M699.2,239.3L697.5,237.7L697.5,247.7L699.2,249.3Z" fill="#7c7c7c" stroke="#7c7c7c" stroke-width="0.6"/><path d="M697.5,237.7L695.7,236.0L695.7,246.0L697.5,247.7Z" fill="#7b7b7b" stroke="#7b7b7b" stroke-width="0.6"/><path d="M695.7,236.0L694.0,234.2L694.0,244.2L695.7,246.0Z" fill="#787878" stroke="#787878" stroke-width="0.6"/><path d="M694.0,234.2L692.3,232.4L692.3,242.4L694.0,244.2Z" fill="#777777" stroke="#777777" stroke-width="0.6"/><path d="M692.3,232.4L690.5,230.4L690.5,240.4L692.3,242.4Z" fill="#777777" stroke="#777777" stroke-width="0.6"/><path d="M690.5,230.4L688.8,228.5L688.8,238.5L690.5,240.4Z" fill="#737373" stroke="#737373" stroke-width="0.6"/><path d="M688.8,228.5L687.3,226.4L687.3,236.4L688.8,238.5Z" fill="#6b6b6b" stroke="#6b6b6b" stroke-width="0.6"/><path d="M687.3,226.4L686.0,224.3L686.0,234.3L687.3,236.4Z" fill="#656565" stroke="#656565" stroke-width="0.6"/><path d="M686.0,224.3L684.9,222.1L684.9,232.1L686.0,234.3Z" fill="#606060" stroke="#606060" stroke-width="0.6"/><path d="M684.9,222.1L684.0,219.8L684.0,229.8L684.9,232.1Z" fill="#595959" stroke="#595959" stroke-width="0.6"/><path d="M684.0,219.8L683.4,217.4L683.4,227.4L684.0,229.8Z" fill="#535353" stroke="#535353" stroke-width="0.6"/><path d="M683.4,217.4L683.0,214.8L683.0,224.8L683.4,227.4Z" fill="#4f4f4f" stroke="#4f4f4f" stroke-width="0.6"/><path d="M683.0,214.8L682.9,212.0L682.9,222.0L683.0,224.8Z" fill="#4e4e4e" stroke="#4e4e4e" stroke-width="0.6"/><path d="M900.0,157.6L899.9,156.0L899.9,166.0L900.0,167.6Z" fill="#4e4e4e" stroke="#4e4e4e" stroke-width="0.6"/><path d="M899.9,156.0L899.6,154.1L899.6,164.1L899.9,166.0Z" fill="#505050" stroke="#505050" stroke-width="0.6"/><path d="M899.6,154.1L899.2,151.9L899.2,161.9L899.6,164.1Z" fill="#505050" stroke="#505050" stroke-width="0.6"/><path d="M899.2,151.9L898.7,149.5L898.7,159.5L899.2,161.9Z" fill="#525252" stroke="#525252" stroke-width="0.6"/><path d="M898.7,149.5L898.0,147.0L898.0,157.0L898.7,159.5Z" fill="#545454" stroke="#545454" stroke-width="0.6"/><path d="M898.0,147.0L897.0,144.7L897.0,154.7L898.0,157.0Z" fill="#5a5a5a" stroke="#5a5a5a" stroke-width="0.6"/><path d="M897.0,144.7L895.8,142.5L895.8,152.5L897.0,154.7Z" fill="#626262" stroke="#626262" stroke-width="0.6"/><path d="M895.8,142.5L894.4,140.4L894.4,150.4L895.8,152.5Z" fill="#686868" stroke="#686868" stroke-width="0.6"/><path d="M894.4,140.4L892.7,138.3L892.7,148.3L894.4,150.4Z" fill="#707070" stroke="#707070" stroke-width="0.6"/><path d="M892.7,138.3L890.8,136.4L890.8,146.4L892.7,148.3Z" fill="#7b7b7b" stroke="#7b7b7b" stroke-width="0.6"/><path d="M890.8,136.4L888.4,134.6L888.4,144.6L890.8,146.4Z" fill="#868686" stroke="#868686" stroke-width="0.6"/><path d="M888.4,134.6L885.7,132.9L885.7,142.9L888.4,144.6Z" fill="#8e8e8e" stroke="#8e8e8e" stroke-width="0.6"/><path d="M885.7,132.9L883.0,131.4L883.0,141.4L885.7,142.9Z" fill="#949494" stroke="#949494" stroke-width="0.6"/><path d="M883.0,131.4L880.4,130.2L880.4,140.2L883.0,141.4Z" fill="#989898" stroke="#989898" stroke-width="0.6"/><path d="M880.4,130.2L878.2,129.4L878.2,139.4L880.4,140.2Z" fill="#a0a0a0" stroke="#a0a0a0" stroke-width="0.6"/><path d="M878.2,129.4L876.2,129.0L876.2,139.0L878.2,139.4Z" fill="#a7a7a7" stroke="#a7a7a7" stroke-width="0.6"/><path d="M876.2,129.0L874.2,128.7L874.2,138.7L876.2,139.0Z" fill="#aaaaaa" stroke="#aaaaaa" stroke-width="0.6"/><path d="M874.2,128.7L872.0,128.3L872.0,138.3L874.2,138.7Z" fill="#aaaaaa" stroke="#aaaaaa" stroke-width="0.6"/><path d="M872.0,128.3L869.5,127.8L869.5,137.8L872.0,138.3Z" fill="#a8a8a8" stroke="#a8a8a8" stroke-width="0.6"/><path d="M869.5,127.8L866.7,127.2L866.7,137.2L869.5,137.8Z" fill="#a8a8a8" stroke="#a8a8a8" stroke-width="0.6"/><path d="M866.7,127.2L864.0,126.7L864.0,136.7L866.7,137.2Z" fill="#a9a9a9" stroke="#a9a9a9" stroke-width="0.6"/><path d="M864.0,126.7L861.2,126.3L861.2,136.3L864.0,136.7Z" fill="#aaaaaa" stroke="#aaaaaa" stroke-width="0.6"/><path d="M861.2,126.3L858.5,125.9L858.5,135.9L861.2,136.3Z" fill="#ababab" stroke="#ababab" stroke-width="0.6"/><path d="M858.5,125.9L855.8,125.5L855.8,135.5L858.5,135.9Z" fill="#ababab" stroke="#ababab" stroke-width="0.6"/><path d="M855.8,125.5L853.1,125.3L853.1,135.3L855.8,135.5Z" fill="#adadad" stroke="#adadad" stroke-width="0.6"/><path d="M853.1,125.3L850.4,125.2L850.4,135.2L853.1,135.3Z" fill="#afafaf" stroke="#afafaf" stroke-width="0.6"/><path d="M850.4,125.2L847.7,125.3L847.7,135.3L850.4,135.2Z" fill="#afafaf" stroke="#afafaf" stroke-width="0.6"/><path d="M847.7,125.3L845.0,125.6L845.0,135.6L847.7,135.3Z" fill="#afafaf" stroke="#afafaf" stroke-width="0.6"/><path d="M845.0,125.6L842.3,126.0L842.3,136.0L845.0,135.6Z" fill="#aeaeae" stroke="#aeaeae" stroke-width="0.6"/><path d="M842.3,126.0L839.6,126.6L839.6,136.6L842.3,136.0Z" fill="#acacac" stroke="#acacac" stroke-width="0.6"/><path d="M839.6,126.6L837.0,127.4L837.0,137.4L839.6,136.6Z" fill="#a9a9a9" stroke="#a9a9a9" stroke-width="0.6"/><path d="M837.0,127.4L834.4,128.5L834.4,138.5L837.0,137.4Z" fill="#a5a5a5" stroke="#a5a5a5" stroke-width="0.6"/><path d="M834.4,128.5L831.9,129.5L831.9,139.5L834.4,138.5Z" fill="#a5a5a5" stroke="#a5a5a5" stroke-width="0.6"/><path d="M831.9,129.5L829.5,130.2L829.5,140.2L831.9,139.5Z" fill="#a9a9a9" stroke="#a9a9a9" stroke-width="0.6"/><path d="M829.5,130.2L827.4,130.6L827.4,140.6L829.5,140.2Z" fill="#adadad" stroke="#adadad" stroke-width="0.6"/><path d="M827.4,130.6L825.4,130.7L825.4,140.7L827.4,140.6Z" fill="#afafaf" stroke="#afafaf" stroke-width="0.6"/><path d="M825.4,130.7L823.5,130.7L823.5,140.7L825.4,140.7Z" fill="#afafaf" stroke="#afafaf" stroke-width="0.6"/><path d="M823.5,130.7L821.6,130.6L821.6,140.6L823.5,140.7Z" fill="#aeaeae" stroke="#aeaeae" stroke-width="0.6"/><path d="M821.6,130.6L819.7,130.3L819.7,140.3L821.6,140.6Z" fill="#ababab" stroke="#ababab" stroke-width="0.6"/><path d="M819.7,130.3L817.8,130.0L817.8,140.0L819.7,140.3Z" fill="#a8a8a8" stroke="#a8a8a8" stroke-width="0.6"/><path d="M817.8,130.0L816.0,129.4L816.0,139.4L817.8,140.0Z" fill="#a3a3a3" stroke="#a3a3a3" stroke-width="0.6"/><path d="M816.0,129.4L814.4,128.8L814.4,138.8L816.0,139.4Z" fill="#9e9e9e" stroke="#9e9e9e" stroke-width="0.6"/><path d="M814.4,128.8L812.9,128.0L812.9,138.0L814.4,138.8Z" fill="#969696" stroke="#969696" stroke-width="0.6"/><path d="M812.9,128.0L811.5,127.2L811.5,137.2L812.9,138.0Z" fill="#8e8e8e" stroke="#8e8e8e" stroke-width="0.6"/><path d="M811.5,127.2L810.3,126.2L810.3,136.2L811.5,137.2Z" fill="#848484" stroke="#848484" stroke-width="0.6"/><path d="M810.3,126.2L809.4,125.2L809.4,135.2L810.3,136.2Z" fill="#767676" stroke="#767676" stroke-width="0.6"/><path d="M809.4,125.2L808.8,124.2L808.8,134.2L809.4,135.2Z" fill="#636363" stroke="#636363" stroke-width="0.6"/><path d="M808.8,124.2L808.5,123.1L808.5,133.1L808.8,134.2Z" fill="#555555" stroke="#555555" stroke-width="0.6"/><path d="M808.5,123.1L808.4,122.0L808.4,132.0L808.5,133.1Z" fill="#4e4e4e" stroke="#4e4e4e" stroke-width="0.6"/><path d="M927.9,160.8L927.9,163.3L927.9,173.3L927.9,170.8Z" fill="#646464" stroke="#646464" stroke-width="0.6"/><path d="M927.9,163.3L927.7,165.6L927.7,175.6L927.9,173.3Z" fill="#646464" stroke="#646464" stroke-width="0.6"/><path d="M927.7,165.6L927.2,167.9L927.2,177.9L927.7,175.6Z" fill="#676767" stroke="#676767" stroke-width="0.6"/><path d="M927.2,167.9L926.4,170.0L926.4,180.0L927.2,177.9Z" fill="#6d6d6d" stroke="#6d6d6d" stroke-width="0.6"/><path d="M926.4,170.0L925.3,172.0L925.3,182.0L926.4,180.0Z" fill="#747474" stroke="#747474" stroke-width="0.6"/><path d="M925.3,172.0L924.1,173.9L924.1,183.9L925.3,182.0Z" fill="#7a7a7a" stroke="#7a7a7a" stroke-width="0.6"/><path d="M924.1,173.9L922.8,175.8L922.8,185.8L924.1,183.9Z" fill="#7c7c7c" stroke="#7c7c7c" stroke-width="0.6"/><path d="M922.8,175.8L921.5,177.6L921.5,187.6L922.8,185.8Z" fill="#7e7e7e" stroke="#7e7e7e" stroke-width="0.6"/><path d="M921.5,177.6L920.0,179.4L920.0,189.4L921.5,187.6Z" fill="#828282" stroke="#828282" stroke-width="0.6"/><path d="M920.0,179.4L918.4,181.1L918.4,191.1L920.0,189.4Z" fill="#868686" stroke="#868686" stroke-width="0.6"/><path d="M918.4,181.1L916.6,182.9L916.6,192.9L918.4,191.1Z" fill="#8a8a8a" stroke="#8a8a8a" stroke-width="0.6"/><path d="M916.6,182.9L914.4,184.9L914.4,194.9L916.6,192.9Z" fill="#8d8d8d" stroke="#8d8d8d" stroke-width="0.6"/><path d="M914.4,184.9L912.0,187.0L912.0,197.0L914.4,194.9Z" fill="#8f8f8f" stroke="#8f8f8f" stroke-width="0.6"/><path d="M912.0,187.0L909.5,189.0L909.5,199.0L912.0,197.0Z" fill="#929292" stroke="#929292" stroke-width="0.6"/><path d="M909.5,189.0L906.9,190.8L906.9,200.8L909.5,199.0Z" fill="#969696" stroke="#969696" stroke-width="0.6"/><path d="M906.9,190.8L904.4,192.3L904.4,202.3L906.9,200.8Z" fill="#9b9b9b" stroke="#9b9b9b" stroke-width="0.6"/><path d="M904.4,192.3L901.9,193.6L901.9,203.6L904.4,202.3Z" fill="#9f9f9f" stroke="#9f9f9f" stroke-width="0.6"/><path d="M901.9,193.6L899.2,194.8L899.2,204.8L901.9,203.6Z" fill="#a2a2a2" stroke="#a2a2a2" stroke-width="0.6"/><path d="M899.2,194.8L896.4,196.1L896.4,206.1L899.2,204.8Z" fill="#a3a3a3" stroke="#a3a3a3" stroke-width="0.6"/><path d="M896.4,196.1L893.3,197.5L893.3,207.5L896.4,206.1Z" fill="#a3a3a3" stroke="#a3a3a3" stroke-width="0.6"/><path d="M893.3,197.5L890.0,198.8L890.0,208.8L893.3,207.5Z" fill="#a4a4a4" stroke="#a4a4a4" stroke-width="0.6"/><path d="M890.0,198.8L886.6,200.2L886.6,210.2L890.0,208.8Z" fill="#a6a6a6" stroke="#a6a6a6" stroke-width="0.6"/><path d="M886.6,200.2L883.2,201.3L883.2,211.3L886.6,210.2Z" fill="#a8a8a8" stroke="#a8a8a8" stroke-width="0.6"/><path d="M883.2,201.3L879.9,202.3L879.9,212.3L883.2,211.3Z" fill="#aaaaaa" stroke="#aaaaaa" stroke-width="0.6"/><path d="M879.9,202.3L876.6,203.1L876.6,213.1L879.9,212.3Z" fill="#ababab" stroke="#ababab" stroke-width="0.6"/><path d="M876.6,203.1L873.3,203.8L873.3,213.8L876.6,213.1Z" fill="#acacac" stroke="#acacac" stroke-width="0.6"/><path d="M873.3,203.8L870.0,204.4L870.0,214.4L873.3,213.8Z" fill="#adadad" stroke="#adadad" stroke-width="0.6"/><path d="M870.0,204.4L866.8,204.9L866.8,214.9L870.0,214.4Z" fill="#adadad" stroke="#adadad" stroke-width="0.6"/><path d="M866.8,204.9L863.6,205.4L863.6,215.4L866.8,214.9Z" fill="#aeaeae" stroke="#aeaeae" stroke-width="0.6"/><path d="M863.6,205.4L860.3,205.7L860.3,215.7L863.6,215.4Z" fill="#afafaf" stroke="#afafaf" stroke-width="0.6"/><path d="M860.3,205.7L856.7,205.9L856.7,215.9L860.3,215.7Z" fill="#afafaf" stroke="#afafaf" stroke-width="0.6"/><path d="M856.7,205.9L852.6,206.0L852.6,216.0L856.7,215.9Z" fill="#afafaf" stroke="#afafaf" stroke-width="0.6"/><path d="M852.6,206.0L848.2,206.0L848.2,216.0L852.6,216.0Z" fill="#afafaf" stroke="#afafaf" stroke-width="0.6"/><path d="M848.2,206.0L843.6,205.8L843.6,215.8L848.2,216.0Z" fill="#afafaf" stroke="#afafaf" stroke-width="0.6"/><path d="M843.6,205.8L839.1,205.4L839.1,215.4L843.6,215.8Z" fill="#adadad" stroke="#adadad" stroke-width="0.6"/><path d="M839.1,205.4L834.6,204.7L834.6,214.7L839.1,215.4Z" fill="#aaaaaa" stroke="#aaaaaa" stroke-width="0.6"/><path d="M834.6,204.7L830.0,203.8L830.0,213.8L834.6,214.7Z" fill="#a8a8a8" stroke="#a8a8a8" stroke-width="0.6"/><path d="M830.0,203.8L825.6,202.6L825.6,212.6L830.0,213.8Z" fill="#a6a6a6" stroke="#a6a6a6" stroke-width="0.6"/><path d="M825.6,202.6L821.5,201.4L821.5,211.4L825.6,212.6Z" fill="#a3a3a3" stroke="#a3a3a3" stroke-width="0.6"/><path d="M821.5,201.4L817.9,200.0L817.9,210.0L821.5,211.4Z" fill="#9e9e9e" stroke="#9e9e9e" stroke-width="0.6"/><path d="M817.9,200.0L814.6,198.5L814.6,208.5L817.9,210.0Z" fill="#989898" stroke="#989898" stroke-width="0.6"/><path d="M814.6,198.5L811.4,196.9L811.4,206.9L814.6,208.5Z" fill="#969696" stroke="#969696" stroke-width="0.6"/><path d="M811.4,196.9L808.2,195.3L808.2,205.3L811.4,206.9Z" fill="#989898" stroke="#989898" stroke-width="0.6"/><path d="M808.2,195.3L804.9,193.9L804.9,203.9L808.2,205.3Z" fill="#9b9b9b" stroke="#9b9b9b" stroke-width="0.6"/><path d="M804.9,193.9L801.7,192.5L801.7,202.5L804.9,203.9Z" fill="#9c9c9c" stroke="#9c9c9c" stroke-width="0.6"/><path d="M801.7,192.5L798.4,191.1L798.4,201.1L801.7,202.5Z" fill="#9b9b9b" stroke="#9b9b9b" stroke-width="0.6"/><path d="M798.4,191.1L795.0,189.5L795.0,199.5L798.4,201.1Z" fill="#999999" stroke="#999999" stroke-width="0.6"/><path d="M795.0,189.5L791.4,187.6L791.4,197.6L795.0,199.5Z" fill="#949494" stroke="#949494" stroke-width="0.6"/><path d="M791.4,187.6L787.8,185.4L787.8,195.4L791.4,197.6Z" fill="#909090" stroke="#909090" stroke-width="0.6"/><path d="M787.8,185.4L784.0,183.3L784.0,193.3L787.8,195.4Z" fill="#939393" stroke="#939393" stroke-width="0.6"/><path d="M784.0,183.3L780.1,181.5L780.1,191.5L784.0,193.3Z" fill="#9a9a9a" stroke="#9a9a9a" stroke-width="0.6"/><path d="M780.1,181.5L775.8,180.1L775.8,190.1L780.1,191.5Z" fill="#a1a1a1" stroke="#a1a1a1" stroke-width="0.6"/><path d="M775.8,180.1L771.3,179.0L771.3,189.0L775.8,190.1Z" fill="#a6a6a6" stroke="#a6a6a6" stroke-width="0.6"/><path d="M771.3,179.0L766.9,178.1L766.9,188.1L771.3,189.0Z" fill="#a8a8a8" stroke="#a8a8a8" stroke-width="0.6"/><path d="M766.9,178.1L762.9,177.5L762.9,187.5L766.9,188.1Z" fill="#ababab" stroke="#ababab" stroke-width="0.6"/><path d="M762.9,177.5L759.6,177.3L759.6,187.3L762.9,187.5Z" fill="#adadad" stroke="#adadad" stroke-width="0.6"/><path d="M759.6,177.3L756.8,177.3L756.8,187.3L759.6,187.3Z" fill="#afafaf" stroke="#afafaf" stroke-width="0.6"/><path d="M756.8,177.3L754.0,177.6L754.0,187.6L756.8,187.3Z" fill="#afafaf" stroke="#afafaf" stroke-width="0.6"/><path d="M754.0,177.6L751.1,177.9L751.1,187.9L754.0,187.6Z" fill="#afafaf" stroke="#afafaf" stroke-width="0.6"/><path d="M751.1,177.9L747.8,178.2L747.8,188.2L751.1,187.9Z" fill="#afafaf" stroke="#afafaf" stroke-width="0.6"/><path d="M747.8,178.2L744.4,178.5L744.4,188.5L747.8,188.2Z" fill="#afafaf" stroke="#afafaf" stroke-width="0.6"/><path d="M744.4,178.5L740.9,179.0L740.9,189.0L744.4,188.5Z" fill="#aeaeae" stroke="#aeaeae" stroke-width="0.6"/><path d="M740.9,179.0L737.6,179.8L737.6,189.8L740.9,189.0Z" fill="#acacac" stroke="#acacac" stroke-width="0.6"/><path d="M737.6,179.8L734.3,180.8L734.3,190.8L737.6,189.8Z" fill="#a9a9a9" stroke="#a9a9a9" stroke-width="0.6"/><path d="M734.3,180.8L731.0,182.1L731.0,192.1L734.3,190.8Z" fill="#a6a6a6" stroke="#a6a6a6" stroke-width="0.6"/><path d="M731.0,182.1L727.9,183.6L727.9,193.6L731.0,192.1Z" fill="#a1a1a1" stroke="#a1a1a1" stroke-width="0.6"/><path d="M727.9,183.6L725.1,185.5L725.1,195.5L727.9,193.6Z" fill="#999999" stroke="#999999" stroke-width="0.6"/><path d="M725.1,185.5L722.6,187.8L722.6,197.8L725.1,195.5Z" fill="#8d8d8d" stroke="#8d8d8d" stroke-width="0.6"/><path d="M722.6,187.8L720.3,190.5L720.3,200.5L722.6,197.8Z" fill="#848484" stroke="#848484" stroke-width="0.6"/><path d="M720.3,190.5L718.3,193.3L718.3,203.3L720.3,200.5Z" fill="#7d7d7d" stroke="#7d7d7d" stroke-width="0.6"/><path d="M718.3,193.3L716.5,196.1L716.5,206.1L718.3,203.3Z" fill="#797979" stroke="#797979" stroke-width="0.6"/><path d="M716.5,196.1L715.0,198.9L715.0,208.9L716.5,206.1Z" fill="#747474" stroke="#747474" stroke-width="0.6"/><path d="M715.0,198.9L713.7,201.9L713.7,211.9L715.0,208.9Z" fill="#6f6f6f" stroke="#6f6f6f" stroke-width="0.6"/><path d="M713.7,201.9L712.7,204.7L712.7,214.7L713.7,211.9Z" fill="#6c6c6c" stroke="#6c6c6c" stroke-width="0.6"/><path d="M712.7,204.7L712.0,207.3L712.0,217.3L712.7,214.7Z" fill="#696969" stroke="#696969" stroke-width="0.6"/><path d="M712.0,207.3L711.6,209.5L711.6,219.5L712.0,217.3Z" fill="#666666" stroke="#666666" stroke-width="0.6"/><path d="M711.6,209.5L711.4,211.5L711.4,221.5L711.6,219.5Z" fill="#646464" stroke="#646464" stroke-width="0.6"/><path d="M739.5,261.3L739.4,263.2L739.4,273.2L739.5,271.3Z" fill="#646464" stroke="#646464" stroke-width="0.6"/><path d="M739.4,263.2L739.0,265.4L739.0,275.4L739.4,273.2Z" fill="#666666" stroke="#666666" stroke-width="0.6"/><path d="M739.0,265.4L738.4,268.2L738.4,278.2L739.0,275.4Z" fill="#676767" stroke="#676767" stroke-width="0.6"/><path d="M738.4,268.2L737.6,271.4L737.6,281.4L738.4,278.2Z" fill="#686868" stroke="#686868" stroke-width="0.6"/><path d="M737.6,271.4L736.6,274.7L736.6,284.7L737.6,281.4Z" fill="#6a6a6a" stroke="#6a6a6a" stroke-width="0.6"/><path d="M736.6,274.7L735.3,277.9L735.3,287.9L736.6,284.7Z" fill="#6f6f6f" stroke="#6f6f6f" stroke-width="0.6"/><path d="M735.3,277.9L733.6,280.9L733.6,290.9L735.3,287.9Z" fill="#757575" stroke="#757575" stroke-width="0.6"/><path d="M733.6,280.9L731.7,283.9L731.7,293.9L733.6,290.9Z" fill="#7a7a7a" stroke="#7a7a7a" stroke-width="0.6"/><path d="M731.7,283.9L729.5,286.7L729.5,296.7L731.7,293.9Z" fill="#808080" stroke="#808080" stroke-width="0.6"/><path d="M729.5,286.7L727.0,289.3L727.0,299.3L729.5,296.7Z" fill="#878787" stroke="#878787" stroke-width="0.6"/><path d="M727.0,289.3L724.3,291.6L724.3,301.6L727.0,299.3Z" fill="#8f8f8f" stroke="#8f8f8f" stroke-width="0.6"/><path d="M724.3,291.6L721.3,293.8L721.3,303.8L724.3,301.6Z" fill="#969696" stroke="#969696" stroke-width="0.6"/><path d="M721.3,293.8L718.0,295.7L718.0,305.7L721.3,303.8Z" fill="#9b9b9b" stroke="#9b9b9b" stroke-width="0.6"/><path d="M718.0,295.7L714.5,297.7L714.5,307.7L718.0,305.7Z" fill="#9e9e9e" stroke="#9e9e9e" stroke-width="0.6"/><path d="M714.5,297.7L710.6,299.7L710.6,309.7L714.5,307.7Z" fill="#9f9f9f" stroke="#9f9f9f" stroke-width="0.6"/><path d="M710.6,299.7L706.5,301.7L706.5,311.7L710.6,309.7Z" fill="#a2a2a2" stroke="#a2a2a2" stroke-width="0.6"/><path d="M706.5,301.7L702.2,303.5L702.2,313.5L706.5,311.7Z" fill="#a4a4a4" stroke="#a4a4a4" stroke-width="0.6"/><path d="M702.2,303.5L697.9,305.0L697.9,315.0L702.2,313.5Z" fill="#a7a7a7" stroke="#a7a7a7" stroke-width="0.6"/><path d="M697.9,305.0L693.7,306.1L693.7,316.1L697.9,315.0Z" fill="#ababab" stroke="#ababab" stroke-width="0.6"/><path d="M693.7,306.1L689.4,306.9L689.4,316.9L693.7,316.1Z" fill="#adadad" stroke="#adadad" stroke-width="0.6"/><path d="M689.4,306.9L685.2,307.5L685.2,317.5L689.4,316.9Z" fill="#aeaeae" stroke="#aeaeae" stroke-width="0.6"/><path d="M685.2,307.5L681.2,308.1L681.2,318.1L685.2,317.5Z" fill="#aeaeae" stroke="#aeaeae" stroke-width="0.6"/><path d="M681.2,308.1L676.7,308.8L676.7,318.8L681.2,318.1Z" fill="#aeaeae" stroke="#aeaeae" stroke-width="0.6"/><path d="M676.7,308.8L671.8,309.5L671.8,319.5L676.7,318.8Z" fill="#aeaeae" stroke="#aeaeae" stroke-width="0.6"/><path d="M671.8,309.5L668.0,310.0L668.0,320.0L671.8,319.5Z" fill="#aeaeae" stroke="#aeaeae" stroke-width="0.6"/><path d="M668.0,310.0L666.4,310.2L666.4,320.2L668.0,320.0Z" fill="#aeaeae" stroke="#aeaeae" stroke-width="0.6"/><path d="M688.2,336.0L688.2,337.9L688.2,347.9L688.2,346.0Z" fill="#646464" stroke="#646464" stroke-width="0.6"/><path d="M688.2,337.9L687.9,339.7L687.9,349.7L688.2,347.9Z" fill="#656565" stroke="#656565" stroke-width="0.6"/><path d="M687.9,339.7L687.5,341.4L687.5,351.4L687.9,349.7Z" fill="#686868" stroke="#686868" stroke-width="0.6"/><path d="M687.5,341.4L686.9,343.0L686.9,353.0L687.5,351.4Z" fill="#6c6c6c" stroke="#6c6c6c" stroke-width="0.6"/><path d="M686.9,343.0L686.2,344.5L686.2,354.5L686.9,353.0Z" fill="#717171" stroke="#717171" stroke-width="0.6"/><path d="M686.2,344.5L685.3,346.0L685.3,356.0L686.2,354.5Z" fill="#7a7a7a" stroke="#7a7a7a" stroke-width="0.6"/><path d="M685.3,346.0L683.9,347.7L683.9,357.7L685.3,356.0Z" fill="#818181" stroke="#818181" stroke-width="0.6"/><path d="M683.9,347.7L682.3,349.6L682.3,359.6L683.9,357.7Z" fill="#838383" stroke="#838383" stroke-width="0.6"/><path d="M682.3,349.6L680.6,351.5L680.6,361.5L682.3,359.6Z" fill="#868686" stroke="#868686" stroke-width="0.6"/><path d="M680.6,351.5L678.1,353.7L678.1,363.7L680.6,361.5Z" fill="#8e8e8e" stroke="#8e8e8e" stroke-width="0.6"/><path d="M678.1,353.7L674.6,356.2L674.6,366.2L678.1,363.7Z" fill="#969696" stroke="#969696" stroke-width="0.6"/><path d="M674.6,356.2L669.5,359.2L669.5,369.2L674.6,366.2Z" fill="#9c9c9c" stroke="#9c9c9c" stroke-width="0.6"/><path d="M669.5,359.2L663.2,362.6L663.2,372.6L669.5,369.2Z" fill="#9e9e9e" stroke="#9e9e9e" stroke-width="0.6"/><path d="M663.2,362.6L656.4,366.2L656.4,376.2L663.2,372.6Z" fill="#9f9f9f" stroke="#9f9f9f" stroke-width="0.6"/><path d="M656.4,366.2L649.9,369.7L649.9,379.7L656.4,376.2Z" fill="#9f9f9f" stroke="#9f9f9f" stroke-width="0.6"/><path d="M649.9,369.7L643.7,373.1L643.7,383.1L649.9,379.7Z" fill="#9e9e9e" stroke="#9e9e9e" stroke-width="0.6"/><path d="M643.7,373.1L637.5,376.5L637.5,386.5L643.7,383.1Z" fill="#9e9e9e" stroke="#9e9e9e" stroke-width="0.6"/><path d="M637.5,376.5L631.3,379.9L631.3,389.9L637.5,386.5Z" fill="#9e9e9e" stroke="#9e9e9e" stroke-width="0.6"/><path d="M631.3,379.9L625.1,383.2L625.1,393.2L631.3,389.9Z" fill="#9e9e9e" stroke="#9e9e9e" stroke-width="0.6"/><path d="M625.1,383.2L618.9,386.6L618.9,396.6L625.1,393.2Z" fill="#9e9e9e" stroke="#9e9e9e" stroke-width="0.6"/><path d="M618.9,386.6L612.8,390.0L612.8,400.0L618.9,396.6Z" fill="#9e9e9e" stroke="#9e9e9e" stroke-width="0.6"/><path d="M612.8,390.0L606.6,393.4L606.6,403.4L612.8,400.0Z" fill="#9e9e9e" stroke="#9e9e9e" stroke-width="0.6"/><path d="M606.6,393.4L600.4,396.8L600.4,406.8L606.6,403.4Z" fill="#9e9e9e" stroke="#9e9e9e" stroke-width="0.6"/><path d="M600.4,396.8L594.2,400.1L594.2,410.1L600.4,406.8Z" fill="#9e9e9e" stroke="#9e9e9e" stroke-width="0.6"/><path d="M594.2,400.1L588.0,403.5L588.0,413.5L594.2,410.1Z" fill="#9e9e9e" stroke="#9e9e9e" stroke-width="0.6"/><path d="M588.0,403.5L581.8,406.9L581.8,416.9L588.0,413.5Z" fill="#9e9e9e" stroke="#9e9e9e" stroke-width="0.6"/><path d="M581.8,406.9L575.6,410.3L575.6,420.3L581.8,416.9Z" fill="#9e9e9e" stroke="#9e9e9e" stroke-width="0.6"/><path d="M575.6,410.3L569.1,413.9L569.1,423.9L575.6,420.3Z" fill="#9e9e9e" stroke="#9e9e9e" stroke-width="0.6"/><path d="M569.1,413.9L562.4,417.7L562.4,427.7L569.1,423.9Z" fill="#9d9d9d" stroke="#9d9d9d" stroke-width="0.6"/><path d="M562.4,417.7L556.1,421.1L556.1,431.1L562.4,427.7Z" fill="#9e9e9e" stroke="#9e9e9e" stroke-width="0.6"/><path d="M556.1,421.1L550.9,423.8L550.9,433.8L556.1,431.1Z" fill="#a0a0a0" stroke="#a0a0a0" stroke-width="0.6"/><path d="M550.9,423.8L547.1,425.4L547.1,435.4L550.9,433.8Z" fill="#a4a4a4" stroke="#a4a4a4" stroke-width="0.6"/><path d="M547.1,425.4L544.4,426.2L544.4,436.2L547.1,435.4Z" fill="#a9a9a9" stroke="#a9a9a9" stroke-width="0.6"/><path d="M544.4,426.2L542.2,426.7L542.2,436.7L544.4,436.2Z" fill="#acacac" stroke="#acacac" stroke-width="0.6"/><path d="M542.2,426.7L540.0,427.2L540.0,437.2L542.2,436.7Z" fill="#acacac" stroke="#acacac" stroke-width="0.6"/><path d="M540.0,427.2L538.0,427.8L538.0,437.8L540.0,437.2Z" fill="#a9a9a9" stroke="#a9a9a9" stroke-width="0.6"/><path d="M538.0,427.8L536.4,428.3L536.4,438.3L538.0,437.8Z" fill="#a9a9a9" stroke="#a9a9a9" stroke-width="0.6"/><path d="M536.4,428.3L534.7,428.6L534.7,438.6L536.4,438.3Z" fill="#acacac" stroke="#acacac" stroke-width="0.6"/><path d="M534.7,428.6L532.5,428.9L532.5,438.9L534.7,438.6Z" fill="#aeaeae" stroke="#aeaeae" stroke-width="0.6"/><path d="M532.5,428.9L529.5,429.0L529.5,439.0L532.5,438.9Z" fill="#afafaf" stroke="#afafaf" stroke-width="0.6"/><path d="M529.5,429.0L525.9,429.1L525.9,439.1L529.5,439.0Z" fill="#afafaf" stroke="#afafaf" stroke-width="0.6"/><path d="M525.9,429.1L522.4,429.0L522.4,439.0L525.9,439.1Z" fill="#afafaf" stroke="#afafaf" stroke-width="0.6"/><path d="M522.4,429.0L519.4,428.9L519.4,438.9L522.4,439.0Z" fill="#afafaf" stroke="#afafaf" stroke-width="0.6"/><path d="M519.4,428.9L517.1,428.7L517.1,438.7L519.4,438.9Z" fill="#aeaeae" stroke="#aeaeae" stroke-width="0.6"/><path d="M517.1,428.7L515.3,428.5L515.3,438.5L517.1,438.7Z" fill="#acacac" stroke="#acacac" stroke-width="0.6"/><path d="M515.3,428.5L513.6,428.2L513.6,438.2L515.3,438.5Z" fill="#a9a9a9" stroke="#a9a9a9" stroke-width="0.6"/><path d="M513.6,428.2L511.9,427.8L511.9,437.8L513.6,438.2Z" fill="#a6a6a6" stroke="#a6a6a6" stroke-width="0.6"/><path d="M511.9,427.8L510.0,427.2L510.0,437.2L511.9,437.8Z" fill="#a3a3a3" stroke="#a3a3a3" stroke-width="0.6"/><path d="M510.0,427.2L508.1,426.5L508.1,436.5L510.0,437.2Z" fill="#9f9f9f" stroke="#9f9f9f" stroke-width="0.6"/><path d="M508.1,426.5L506.3,425.7L506.3,435.7L508.1,436.5Z" fill="#9b9b9b" stroke="#9b9b9b" stroke-width="0.6"/><path d="M506.3,425.7L504.5,424.9L504.5,434.9L506.3,435.7Z" fill="#989898" stroke="#989898" stroke-width="0.6"/><path d="M504.5,424.9L503.1,424.3L503.1,434.3L504.5,434.9Z" fill="#999999" stroke="#999999" stroke-width="0.6"/><path d="M503.1,424.3L502.0,423.7L502.0,433.7L503.1,434.3Z" fill="#989898" stroke="#989898" stroke-width="0.6"/><path d="M502.0,423.7L500.5,422.8L500.5,432.8L502.0,433.7Z" fill="#8e8e8e" stroke="#8e8e8e" stroke-width="0.6"/><path d="M500.5,422.8L497.9,420.9L497.9,430.9L500.5,432.8Z" fill="#898989" stroke="#898989" stroke-width="0.6"/><path d="M497.9,420.9L493.7,417.7L493.7,427.7L497.9,430.9Z" fill="#868686" stroke="#868686" stroke-width="0.6"/><path d="M493.7,417.7L488.5,413.5L488.5,423.5L493.7,427.7Z" fill="#858585" stroke="#858585" stroke-width="0.6"/><path d="M488.5,413.5L482.8,409.0L482.8,419.0L488.5,423.5Z" fill="#848484" stroke="#848484" stroke-width="0.6"/><path d="M482.8,409.0L477.3,404.6L477.3,414.6L482.8,419.0Z" fill="#848484" stroke="#848484" stroke-width="0.6"/><path d="M477.3,404.6L472.1,400.6L472.1,410.6L477.3,414.6Z" fill="#858585" stroke="#858585" stroke-width="0.6"/><path d="M472.1,400.6L467.0,396.5L467.0,406.5L472.1,410.6Z" fill="#858585" stroke="#858585" stroke-width="0.6"/><path d="M467.0,396.5L461.8,392.4L461.8,402.4L467.0,406.5Z" fill="#858585" stroke="#858585" stroke-width="0.6"/><path d="M461.8,392.4L456.7,388.4L456.7,398.4L461.8,402.4Z" fill="#858585" stroke="#858585" stroke-width="0.6"/><path d="M456.7,388.4L451.5,384.3L451.5,394.3L456.7,398.4Z" fill="#858585" stroke="#858585" stroke-width="0.6"/><path d="M451.5,384.3L446.4,380.2L446.4,390.2L451.5,394.3Z" fill="#858585" stroke="#858585" stroke-width="0.6"/><path d="M446.4,380.2L441.2,376.2L441.2,386.2L446.4,390.2Z" fill="#858585" stroke="#858585" stroke-width="0.6"/><path d="M441.2,376.2L436.0,372.1L436.0,382.1L441.2,386.2Z" fill="#858585" stroke="#858585" stroke-width="0.6"/><path d="M436.0,372.1L430.9,368.1L430.9,378.1L436.0,382.1Z" fill="#858585" stroke="#858585" stroke-width="0.6"/><path d="M430.9,368.1L425.7,364.0L425.7,374.0L430.9,378.1Z" fill="#858585" stroke="#858585" stroke-width="0.6"/><path d="M425.7,364.0L420.6,359.9L420.6,369.9L425.7,374.0Z" fill="#858585" stroke="#858585" stroke-width="0.6"/><path d="M420.6,359.9L415.4,355.9L415.4,365.9L420.6,369.9Z" fill="#858585" stroke="#858585" stroke-width="0.6"/><path d="M415.4,355.9L409.9,351.6L409.9,361.6L415.4,365.9Z" fill="#858585" stroke="#858585" stroke-width="0.6"/><path d="M409.9,351.6L404.2,347.2L404.2,357.2L409.9,361.6Z" fill="#868686" stroke="#868686" stroke-width="0.6"/><path d="M404.2,347.2L399.0,343.1L399.0,353.1L404.2,357.2Z" fill="#858585" stroke="#858585" stroke-width="0.6"/><path d="M399.0,343.1L394.8,339.6L394.8,349.6L399.0,353.1Z" fill="#828282" stroke="#828282" stroke-width="0.6"/><path d="M394.8,339.6L392.1,337.0L392.1,347.0L394.8,349.6Z" fill="#7d7d7d" stroke="#7d7d7d" stroke-width="0.6"/><path d="M392.1,337.0L390.4,335.1L390.4,345.1L392.1,347.0Z" fill="#747474" stroke="#747474" stroke-width="0.6"/><path d="M390.4,335.1L389.3,333.6L389.3,343.6L390.4,345.1Z" fill="#6a6a6a" stroke="#6a6a6a" stroke-width="0.6"/><path d="M389.3,333.6L388.4,332.0L388.4,342.0L389.3,343.6Z" fill="#656565" stroke="#656565" stroke-width="0.6"/><path d="M388.4,332.0L387.6,330.5L387.6,340.5L388.4,342.0Z" fill="#616161" stroke="#616161" stroke-width="0.6"/><path d="M387.6,330.5L387.2,329.2L387.2,339.2L387.6,340.5Z" fill="#575757" stroke="#575757" stroke-width="0.6"/><path d="M387.2,329.2L386.9,327.9L386.9,337.9L387.2,339.2Z" fill="#505050" stroke="#505050" stroke-width="0.6"/><path d="M386.9,327.9L386.8,326.4L386.8,336.4L386.9,337.9Z" fill="#4e4e4e" stroke="#4e4e4e" stroke-width="0.6"/></g>
<path d="M386.8,336.4L386.7,334.6M386.7,334.6L386.7,332.5M658.7,233.8L658.4,234.8M658.4,234.8L657.6,235.9M657.6,235.9L656.2,237.1M656.2,237.1L654.3,238.4M654.3,238.4L652.1,239.7M652.1,239.7L649.7,240.9M649.7,240.9L647.0,241.8M647.0,241.8L644.0,242.6M644.0,242.6L641.0,243.4M641.0,243.4L638.1,244.5M638.1,244.5L635.4,245.9M635.4,245.9L632.8,247.4M632.8,247.4L630.4,249.2M630.4,249.2L628.1,251.0M628.1,251.0L626.0,253.0M626.0,253.0L624.1,255.1M624.1,255.1L622.4,257.4M622.4,257.4L620.9,259.7M620.9,259.7L619.6,262.2M619.6,262.2L618.5,264.8M618.5,264.8L617.7,267.4M617.7,267.4L617.2,269.8M617.2,269.8L617.0,271.8M711.1,265.2L710.8,263.2M710.8,263.2L710.1,261.4M710.1,261.4L709.0,259.7M709.0,259.7L707.7,258.1M707.7,258.1L706.4,256.5M706.4,256.5L705.1,255.0M705.1,255.0L703.7,253.7M703.7,253.7L702.3,252.4M702.3,252.4L700.8,250.9M700.8,250.9L699.2,249.3M699.2,249.3L697.5,247.7M697.5,247.7L695.7,246.0M695.7,246.0L694.0,244.2M694.0,244.2L692.3,242.4M692.3,242.4L690.5,240.4M690.5,240.4L688.8,238.5M688.8,238.5L687.3,236.4M687.3,236.4L686.0,234.3M686.0,234.3L684.9,232.1M684.9,232.1L684.0,229.8M684.0,229.8L683.4,227.4M683.4,227.4L683.0,224.8M683.0,224.8L682.9,222.0M900.0,167.6L899.9,166.0M899.9,166.0L899.6,164.1M899.6,164.1L899.2,161.9M899.2,161.9L898.7,159.5M898.7,159.5L898.0,157.0M898.0,157.0L897.0,154.7M897.0,154.7L895.8,152.5M895.8,152.5L894.4,150.4M894.4,150.4L892.7,148.3M892.7,148.3L890.8,146.4M890.8,146.4L888.4,144.6M888.4,144.6L885.7,142.9M885.7,142.9L883.0,141.4M883.0,141.4L880.4,140.2M880.4,140.2L878.2,139.4M878.2,139.4L876.2,139.0M876.2,139.0L874.2,138.7M874.2,138.7L872.0,138.3M872.0,138.3L869.5,137.8M869.5,137.8L866.7,137.2M866.7,137.2L864.0,136.7M864.0,136.7L861.2,136.3M861.2,136.3L858.5,135.9M858.5,135.9L855.8,135.5M855.8,135.5L853.1,135.3M853.1,135.3L850.4,135.2M850.4,135.2L847.7,135.3M847.7,135.3L845.0,135.6M845.0,135.6L842.3,136.0M842.3,136.0L839.6,136.6M839.6,136.6L837.0,137.4M837.0,137.4L834.4,138.5M834.4,138.5L831.9,139.5M831.9,139.5L829.5,140.2M829.5,140.2L827.4,140.6M827.4,140.6L825.4,140.7M825.4,140.7L823.5,140.7M823.5,140.7L821.6,140.6M821.6,140.6L819.7,140.3M819.7,140.3L817.8,140.0M817.8,140.0L816.0,139.4M816.0,139.4L814.4,138.8M814.4,138.8L812.9,138.0M812.9,138.0L811.5,137.2M811.5,137.2L810.3,136.2M810.3,136.2L809.4,135.2M809.4,135.2L808.8,134.2M808.8,134.2L808.5,133.1M808.5,133.1L808.4,132.0M927.9,170.8L927.9,173.3M927.9,173.3L927.7,175.6M927.7,175.6L927.2,177.9M927.2,177.9L926.4,180.0M926.4,180.0L925.3,182.0M925.3,182.0L924.1,183.9M924.1,183.9L922.8,185.8M922.8,185.8L921.5,187.6M921.5,187.6L920.0,189.4M920.0,189.4L918.4,191.1M918.4,191.1L916.6,192.9M916.6,192.9L914.4,194.9M914.4,194.9L912.0,197.0M912.0,197.0L909.5,199.0M909.5,199.0L906.9,200.8M906.9,200.8L904.4,202.3M904.4,202.3L901.9,203.6M901.9,203.6L899.2,204.8M899.2,204.8L896.4,206.1M896.4,206.1L893.3,207.5M893.3,207.5L890.0,208.8M890.0,208.8L886.6,210.2M886.6,210.2L883.2,211.3M883.2,211.3L879.9,212.3M879.9,212.3L876.6,213.1M876.6,213.1L873.3,213.8M873.3,213.8L870.0,214.4M870.0,214.4L866.8,214.9M866.8,214.9L863.6,215.4M863.6,215.4L860.3,215.7M860.3,215.7L856.7,215.9M856.7,215.9L852.6,216.0M852.6,216.0L848.2,216.0M848.2,216.0L843.6,215.8M843.6,215.8L839.1,215.4M839.1,215.4L834.6,214.7M834.6,214.7L830.0,213.8M830.0,213.8L825.6,212.6M825.6,212.6L821.5,211.4M821.5,211.4L817.9,210.0M817.9,210.0L814.6,208.5M814.6,208.5L811.4,206.9M811.4,206.9L808.2,205.3M808.2,205.3L804.9,203.9M804.9,203.9L801.7,202.5M801.7,202.5L798.4,201.1M798.4,201.1L795.0,199.5M795.0,199.5L791.4,197.6M791.4,197.6L787.8,195.4M787.8,195.4L784.0,193.3M784.0,193.3L780.1,191.5M780.1,191.5L775.8,190.1M775.8,190.1L771.3,189.0M771.3,189.0L766.9,188.1M766.9,188.1L762.9,187.5M762.9,187.5L759.6,187.3M759.6,187.3L756.8,187.3M756.8,187.3L754.0,187.6M754.0,187.6L751.1,187.9M751.1,187.9L747.8,188.2M747.8,188.2L744.4,188.5M744.4,188.5L740.9,189.0M740.9,189.0L737.6,189.8M737.6,189.8L734.3,190.8M734.3,190.8L731.0,192.1M731.0,192.1L727.9,193.6M727.9,193.6L725.1,195.5M725.1,195.5L722.6,197.8M722.6,197.8L720.3,200.5M720.3,200.5L718.3,203.3M718.3,203.3L716.5,206.1M716.5,206.1L715.0,208.9M715.0,208.9L713.7,211.9M713.7,211.9L712.7,214.7M712.7,214.7L712.0,217.3M712.0,217.3L711.6,219.5M711.6,219.5L711.4,221.5M739.5,271.3L739.4,273.2M739.4,273.2L739.0,275.4M739.0,275.4L738.4,278.2M738.4,278.2L737.6,281.4M737.6,281.4L736.6,284.7M736.6,284.7L735.3,287.9M735.3,287.9L733.6,290.9M733.6,290.9L731.7,293.9M731.7,293.9L729.5,296.7M729.5,296.7L727.0,299.3M727.0,299.3L724.3,301.6M724.3,301.6L721.3,303.8M721.3,303.8L718.0,305.7M718.0,305.7L714.5,307.7M714.5,307.7L710.6,309.7M710.6,309.7L706.5,311.7M706.5,311.7L702.2,313.5M702.2,313.5L697.9,315.0M697.9,315.0L693.7,316.1M693.7,316.1L689.4,316.9M689.4,316.9L685.2,317.5M685.2,317.5L681.2,318.1M681.2,318.1L676.7,318.8M676.7,318.8L671.8,319.5M671.8,319.5L668.0,320.0M668.0,320.0L666.4,320.2M688.2,346.0L688.2,347.9M688.2,347.9L687.9,349.7M687.9,349.7L687.5,351.4M687.5,351.4L686.9,353.0M686.9,353.0L686.2,354.5M686.2,354.5L685.3,356.0M685.3,356.0L683.9,357.7M683.9,357.7L682.3,359.6M682.3,359.6L680.6,361.5M680.6,361.5L678.1,363.7M678.1,363.7L674.6,366.2M674.6,366.2L669.5,369.2M669.5,369.2L663.2,372.6M663.2,372.6L656.4,376.2M656.4,376.2L649.9,379.7M649.9,379.7L643.7,383.1M643.7,383.1L637.5,386.5M637.5,386.5L631.3,389.9M631.3,389.9L625.1,393.2M625.1,393.2L618.9,396.6M618.9,396.6L612.8,400.0M612.8,400.0L606.6,403.4M606.6,403.4L600.4,406.8M600.4,406.8L594.2,410.1M594.2,410.1L588.0,413.5M588.0,413.5L581.8,416.9M581.8,416.9L575.6,420.3M575.6,420.3L569.1,423.9M569.1,423.9L562.4,427.7M562.4,427.7L556.1,431.1M556.1,431.1L550.9,433.8M550.9,433.8L547.1,435.4M547.1,435.4L544.4,436.2M544.4,436.2L542.2,436.7M542.2,436.7L540.0,437.2M540.0,437.2L538.0,437.8M538.0,437.8L536.4,438.3M536.4,438.3L534.7,438.6M534.7,438.6L532.5,438.9M532.5,438.9L529.5,439.0M529.5,439.0L525.9,439.1M525.9,439.1L522.4,439.0M522.4,439.0L519.4,438.9M519.4,438.9L517.1,438.7M517.1,438.7L515.3,438.5M515.3,438.5L513.6,438.2M513.6,438.2L511.9,437.8M511.9,437.8L510.0,437.2M510.0,437.2L508.1,436.5M508.1,436.5L506.3,435.7M506.3,435.7L504.5,434.9M504.5,434.9L503.1,434.3M503.1,434.3L502.0,433.7M502.0,433.7L500.5,432.8M500.5,432.8L497.9,430.9M497.9,430.9L493.7,427.7M493.7,427.7L488.5,423.5M488.5,423.5L482.8,419.0M482.8,419.0L477.3,414.6M477.3,414.6L472.1,410.6M472.1,410.6L467.0,406.5M467.0,406.5L461.8,402.4M461.8,402.4L456.7,398.4M456.7,398.4L451.5,394.3M451.5,394.3L446.4,390.2M446.4,390.2L441.2,386.2M441.2,386.2L436.0,382.1M436.0,382.1L430.9,378.1M430.9,378.1L425.7,374.0M425.7,374.0L420.6,369.9M420.6,369.9L415.4,365.9M415.4,365.9L409.9,361.6M409.9,361.6L404.2,357.2M404.2,357.2L399.0,353.1M399.0,353.1L394.8,349.6M394.8,349.6L392.1,347.0M392.1,347.0L390.4,345.1M390.4,345.1L389.3,343.6M389.3,343.6L388.4,342.0M388.4,342.0L387.6,340.5M387.6,340.5L387.2,339.2M387.2,339.2L386.9,337.9M386.9,337.9L386.8,336.4" fill="none" stroke="#151515" stroke-width="1.25" stroke-linecap="round"/>
<path d="M394.8,339.6v10M497.9,420.9v10M550.9,423.8v10M674.6,356.2v10M649.7,230.9v10M794.5,189.5v10M829.5,130.2v10M700.5,240.9v10" stroke="#151515" stroke-width="1.1"/>
<use href="#ol" fill="#8f8f8f" stroke="#151515" stroke-width="1.25"/>
<g fill="#767676" fill-rule="evenodd"><path d="M517.6,303.4 L579.5,288.3 L592.0,297.7 L558.7,336.7 L548.8,328.4 L554.0,321.6 L538.4,309.1 L528.0,312.3ZM550.4,305.5 L574.8,299.3 L560.8,314.3Z" transform="translate(0,0.8)"/><path d="M517.6,303.4 L579.5,288.3 L592.0,297.7 L558.7,336.7 L548.8,328.4 L554.0,321.6 L538.4,309.1 L528.0,312.3ZM550.4,305.5 L574.8,299.3 L560.8,314.3Z" transform="translate(0,1.6)"/><path d="M517.6,303.4 L579.5,288.3 L592.0,297.7 L558.7,336.7 L548.8,328.4 L554.0,321.6 L538.4,309.1 L528.0,312.3ZM550.4,305.5 L574.8,299.3 L560.8,314.3Z" transform="translate(0,2.4)"/><path d="M517.6,303.4 L579.5,288.3 L592.0,297.7 L558.7,336.7 L548.8,328.4 L554.0,321.6 L538.4,309.1 L528.0,312.3ZM550.4,305.5 L574.8,299.3 L560.8,314.3Z" transform="translate(0,2.8)"/></g>
<path d="M517.6,303.4 L579.5,288.3 L592.0,297.7 L558.7,336.7 L548.8,328.4 L554.0,321.6 L538.4,309.1 L528.0,312.3ZM550.4,305.5 L574.8,299.3 L560.8,314.3Z" transform="translate(0,2.8)" fill="none" stroke="#1c1c1c" stroke-width="0.8"/>
<path d="M517.6,303.4 L579.5,288.3 L592.0,297.7 L558.7,336.7 L548.8,328.4 L554.0,321.6 L538.4,309.1 L528.0,312.3ZM550.4,305.5 L574.8,299.3 L560.8,314.3Z" fill="#8f8f8f" fill-rule="evenodd" stroke="#151515" stroke-width="1.05"/>
<g fill="#767676" fill-rule="evenodd"><path d="M563.8,341.0 L611.9,313.4 L625.3,325.0 L609.3,344.8 L643.2,337.8 L656.0,349.3 L608.0,376.8 L598.4,367.9 L632.3,348.7 L598.4,355.0 L592.0,350.6 L608.7,328.8 L573.4,349.3Z" transform="translate(0,0.8)"/><path d="M563.8,341.0 L611.9,313.4 L625.3,325.0 L609.3,344.8 L643.2,337.8 L656.0,349.3 L608.0,376.8 L598.4,367.9 L632.3,348.7 L598.4,355.0 L592.0,350.6 L608.7,328.8 L573.4,349.3Z" transform="translate(0,1.6)"/><path d="M563.8,341.0 L611.9,313.4 L625.3,325.0 L609.3,344.8 L643.2,337.8 L656.0,349.3 L608.0,376.8 L598.4,367.9 L632.3,348.7 L598.4,355.0 L592.0,350.6 L608.7,328.8 L573.4,349.3Z" transform="translate(0,2.4)"/><path d="M563.8,341.0 L611.9,313.4 L625.3,325.0 L609.3,344.8 L643.2,337.8 L656.0,349.3 L608.0,376.8 L598.4,367.9 L632.3,348.7 L598.4,355.0 L592.0,350.6 L608.7,328.8 L573.4,349.3Z" transform="translate(0,2.8)"/></g>
<path d="M563.8,341.0 L611.9,313.4 L625.3,325.0 L609.3,344.8 L643.2,337.8 L656.0,349.3 L608.0,376.8 L598.4,367.9 L632.3,348.7 L598.4,355.0 L592.0,350.6 L608.7,328.8 L573.4,349.3Z" transform="translate(0,2.8)" fill="none" stroke="#1c1c1c" stroke-width="0.8"/>
<path d="M563.8,341.0 L611.9,313.4 L625.3,325.0 L609.3,344.8 L643.2,337.8 L656.0,349.3 L608.0,376.8 L598.4,367.9 L632.3,348.7 L598.4,355.0 L592.0,350.6 L608.7,328.8 L573.4,349.3Z" fill="#8f8f8f" fill-rule="evenodd" stroke="#151515" stroke-width="1.05"/>
<g fill="#767676" fill-rule="evenodd"><path d="M468.8,346.9 L477.2,342.3 L486.5,349.5 L517.2,332.4 L506.3,326.6 L513.6,322.0 L524.5,326.6 L535.4,335.5 L497.0,357.3 L505.3,364.1 L496.4,370.4Z" transform="translate(0,0.8)"/><path d="M468.8,346.9 L477.2,342.3 L486.5,349.5 L517.2,332.4 L506.3,326.6 L513.6,322.0 L524.5,326.6 L535.4,335.5 L497.0,357.3 L505.3,364.1 L496.4,370.4Z" transform="translate(0,1.6)"/><path d="M468.8,346.9 L477.2,342.3 L486.5,349.5 L517.2,332.4 L506.3,326.6 L513.6,322.0 L524.5,326.6 L535.4,335.5 L497.0,357.3 L505.3,364.1 L496.4,370.4Z" transform="translate(0,2.4)"/><path d="M468.8,346.9 L477.2,342.3 L486.5,349.5 L517.2,332.4 L506.3,326.6 L513.6,322.0 L524.5,326.6 L535.4,335.5 L497.0,357.3 L505.3,364.1 L496.4,370.4Z" transform="translate(0,2.8)"/></g>
<path d="M468.8,346.9 L477.2,342.3 L486.5,349.5 L517.2,332.4 L506.3,326.6 L513.6,322.0 L524.5,326.6 L535.4,335.5 L497.0,357.3 L505.3,364.1 L496.4,370.4Z" transform="translate(0,2.8)" fill="none" stroke="#1c1c1c" stroke-width="0.8"/>
<path d="M468.8,346.9 L477.2,342.3 L486.5,349.5 L517.2,332.4 L506.3,326.6 L513.6,322.0 L524.5,326.6 L535.4,335.5 L497.0,357.3 L505.3,364.1 L496.4,370.4Z" fill="#8f8f8f" fill-rule="evenodd" stroke="#151515" stroke-width="1.05"/>
<g fill="#767676" fill-rule="evenodd"><path d="M558.9,275.0 C558.9,275.0 554.9,268.1 552.2,265.4 C549.5,262.7 546.1,260.3 542.6,258.6 C539.1,256.9 535.1,255.9 531.1,255.3 C527.1,254.8 523.1,254.4 518.6,255.3 C514.1,256.2 508.4,258.3 504.2,260.6 C500.0,262.9 495.8,266.2 493.6,269.2 C491.4,272.2 491.0,275.8 491.2,278.8 C491.4,281.8 492.4,284.8 494.6,287.4 C496.8,289.9 500.7,291.9 504.2,294.1 C507.7,296.3 515.7,300.4 515.7,300.4 C515.7,300.4 526.3,294.1 526.3,294.1 C526.3,294.1 523.2,292.7 520.5,291.3 C517.8,289.9 512.5,287.8 510.0,285.5 C507.4,283.2 505.5,280.2 505.2,277.8 C504.9,275.4 506.1,273.0 508.0,271.1 C509.9,269.2 513.3,267.3 516.7,266.3 C520.1,265.3 524.4,264.6 528.2,264.9 C532.0,265.2 536.7,266.5 539.7,268.2 C542.7,269.9 545.0,272.6 546.4,275.0 C547.8,277.4 548.3,282.6 548.3,282.6 C548.3,282.6 558.9,275.0 558.9,275.0Z" transform="translate(0,0.8)"/><path d="M558.9,275.0 C558.9,275.0 554.9,268.1 552.2,265.4 C549.5,262.7 546.1,260.3 542.6,258.6 C539.1,256.9 535.1,255.9 531.1,255.3 C527.1,254.8 523.1,254.4 518.6,255.3 C514.1,256.2 508.4,258.3 504.2,260.6 C500.0,262.9 495.8,266.2 493.6,269.2 C491.4,272.2 491.0,275.8 491.2,278.8 C491.4,281.8 492.4,284.8 494.6,287.4 C496.8,289.9 500.7,291.9 504.2,294.1 C507.7,296.3 515.7,300.4 515.7,300.4 C515.7,300.4 526.3,294.1 526.3,294.1 C526.3,294.1 523.2,292.7 520.5,291.3 C517.8,289.9 512.5,287.8 510.0,285.5 C507.4,283.2 505.5,280.2 505.2,277.8 C504.9,275.4 506.1,273.0 508.0,271.1 C509.9,269.2 513.3,267.3 516.7,266.3 C520.1,265.3 524.4,264.6 528.2,264.9 C532.0,265.2 536.7,266.5 539.7,268.2 C542.7,269.9 545.0,272.6 546.4,275.0 C547.8,277.4 548.3,282.6 548.3,282.6 C548.3,282.6 558.9,275.0 558.9,275.0Z" transform="translate(0,1.6)"/><path d="M558.9,275.0 C558.9,275.0 554.9,268.1 552.2,265.4 C549.5,262.7 546.1,260.3 542.6,258.6 C539.1,256.9 535.1,255.9 531.1,255.3 C527.1,254.8 523.1,254.4 518.6,255.3 C514.1,256.2 508.4,258.3 504.2,260.6 C500.0,262.9 495.8,266.2 493.6,269.2 C491.4,272.2 491.0,275.8 491.2,278.8 C491.4,281.8 492.4,284.8 494.6,287.4 C496.8,289.9 500.7,291.9 504.2,294.1 C507.7,296.3 515.7,300.4 515.7,300.4 C515.7,300.4 526.3,294.1 526.3,294.1 C526.3,294.1 523.2,292.7 520.5,291.3 C517.8,289.9 512.5,287.8 510.0,285.5 C507.4,283.2 505.5,280.2 505.2,277.8 C504.9,275.4 506.1,273.0 508.0,271.1 C509.9,269.2 513.3,267.3 516.7,266.3 C520.1,265.3 524.4,264.6 528.2,264.9 C532.0,265.2 536.7,266.5 539.7,268.2 C542.7,269.9 545.0,272.6 546.4,275.0 C547.8,277.4 548.3,282.6 548.3,282.6 C548.3,282.6 558.9,275.0 558.9,275.0Z" transform="translate(0,2.4)"/><path d="M558.9,275.0 C558.9,275.0 554.9,268.1 552.2,265.4 C549.5,262.7 546.1,260.3 542.6,258.6 C539.1,256.9 535.1,255.9 531.1,255.3 C527.1,254.8 523.1,254.4 518.6,255.3 C514.1,256.2 508.4,258.3 504.2,260.6 C500.0,262.9 495.8,266.2 493.6,269.2 C491.4,272.2 491.0,275.8 491.2,278.8 C491.4,281.8 492.4,284.8 494.6,287.4 C496.8,289.9 500.7,291.9 504.2,294.1 C507.7,296.3 515.7,300.4 515.7,300.4 C515.7,300.4 526.3,294.1 526.3,294.1 C526.3,294.1 523.2,292.7 520.5,291.3 C517.8,289.9 512.5,287.8 510.0,285.5 C507.4,283.2 505.5,280.2 505.2,277.8 C504.9,275.4 506.1,273.0 508.0,271.1 C509.9,269.2 513.3,267.3 516.7,266.3 C520.1,265.3 524.4,264.6 528.2,264.9 C532.0,265.2 536.7,266.5 539.7,268.2 C542.7,269.9 545.0,272.6 546.4,275.0 C547.8,277.4 548.3,282.6 548.3,282.6 C548.3,282.6 558.9,275.0 558.9,275.0Z" transform="translate(0,2.8)"/></g>
<path d="M558.9,275.0 C558.9,275.0 554.9,268.1 552.2,265.4 C549.5,262.7 546.1,260.3 542.6,258.6 C539.1,256.9 535.1,255.9 531.1,255.3 C527.1,254.8 523.1,254.4 518.6,255.3 C514.1,256.2 508.4,258.3 504.2,260.6 C500.0,262.9 495.8,266.2 493.6,269.2 C491.4,272.2 491.0,275.8 491.2,278.8 C491.4,281.8 492.4,284.8 494.6,287.4 C496.8,289.9 500.7,291.9 504.2,294.1 C507.7,296.3 515.7,300.4 515.7,300.4 C515.7,300.4 526.3,294.1 526.3,294.1 C526.3,294.1 523.2,292.7 520.5,291.3 C517.8,289.9 512.5,287.8 510.0,285.5 C507.4,283.2 505.5,280.2 505.2,277.8 C504.9,275.4 506.1,273.0 508.0,271.1 C509.9,269.2 513.3,267.3 516.7,266.3 C520.1,265.3 524.4,264.6 528.2,264.9 C532.0,265.2 536.7,266.5 539.7,268.2 C542.7,269.9 545.0,272.6 546.4,275.0 C547.8,277.4 548.3,282.6 548.3,282.6 C548.3,282.6 558.9,275.0 558.9,275.0Z" transform="translate(0,2.8)" fill="none" stroke="#1c1c1c" stroke-width="0.8"/>
<path d="M558.9,275.0 C558.9,275.0 554.9,268.1 552.2,265.4 C549.5,262.7 546.1,260.3 542.6,258.6 C539.1,256.9 535.1,255.9 531.1,255.3 C527.1,254.8 523.1,254.4 518.6,255.3 C514.1,256.2 508.4,258.3 504.2,260.6 C500.0,262.9 495.8,266.2 493.6,269.2 C491.4,272.2 491.0,275.8 491.2,278.8 C491.4,281.8 492.4,284.8 494.6,287.4 C496.8,289.9 500.7,291.9 504.2,294.1 C507.7,296.3 515.7,300.4 515.7,300.4 C515.7,300.4 526.3,294.1 526.3,294.1 C526.3,294.1 523.2,292.7 520.5,291.3 C517.8,289.9 512.5,287.8 510.0,285.5 C507.4,283.2 505.5,280.2 505.2,277.8 C504.9,275.4 506.1,273.0 508.0,271.1 C509.9,269.2 513.3,267.3 516.7,266.3 C520.1,265.3 524.4,264.6 528.2,264.9 C532.0,265.2 536.7,266.5 539.7,268.2 C542.7,269.9 545.0,272.6 546.4,275.0 C547.8,277.4 548.3,282.6 548.3,282.6 C548.3,282.6 558.9,275.0 558.9,275.0Z" fill="#8f8f8f" fill-rule="evenodd" stroke="#151515" stroke-width="1.05"/>
</svg>
<svg width="1134" height="625" style="left:0;top:0;position:absolute" viewBox="0 0 1134 625">
<path d="M1091.3,86.2L1097.6,93.2H1085z" fill="#c9c9db"/>
<path d="M1091.3,162.6L1097.6,155.4H1085z" fill="#c9c9db"/>
<path d="M1052.6,124.3L1059.8,117.6V131z" fill="#c9c9db"/>
<path d="M1130.2,124.3L1123,117.6V131z" fill="#c9c9db"/>
<path d="M1081,90.6 Q1071,93 1065.5,100 L1063.2,97.5 L1063,106 L1070.5,104.5 L1068.2,102.3 Q1073,96.5 1081.5,94z" fill="#c9c9db" stroke="#2a2a50" stroke-width="0.5"/>
<path d="M1101.6,90.6 Q1111.6,93 1117.1,100 L1119.4,97.5 L1119.6,106 L1112.1,104.5 L1114.4,102.3 Q1109.6,96.5 1101.1,94z" fill="#c9c9db" stroke="#2a2a50" stroke-width="0.5"/>
<circle cx="1125.6" cy="90.9" r="3.6" fill="#c9c9db"/>
<path d="M1112,148.5l5.5,-2.5l5.5,2.5v6.5l-5.5,2.5l-5.5,-2.5z" fill="#d8d8e4" stroke="#2a2a3e" stroke-width="0.6"/><path d="M1112,148.5l5.5,2.5l5.5,-2.5M1117.5,151v6.5" fill="none" stroke="#2a2a3e" stroke-width="0.6"/>
<path d="M1073.8,108.5 L1090.9,100.0 L1098.5,101.4 L1108.8,109.4 L1113.4,115.7 L1113.7,129.1 L1111.9,138.1 L1093.5,149.0 L1086.4,149.0 L1069.4,137.4 L1068.0,130.9 L1068.0,117.5 L1069.4,113.0z" fill="#d3d3df" stroke="#1c1c30" stroke-width="1.2" stroke-linejoin="round"/>
<path d="M1074.0,108.7 L1072.5,116.1 L1085.9,122.0 L1093.5,122.0 L1108.3,114.4 L1107.9,110.8 L1098.5,101.6M1072.5,116.1 L1068.5,117.9M1108.3,114.4 L1113.2,116.8M1085.9,122.0 L1084.1,126.0 L1086.8,131.8 L1091.8,131.8 L1094.9,125.5 L1093.5,122.0M1084.1,126.0 L1068.3,119.1M1094.9,125.5 L1113.5,117.9M1086.8,131.8 L1086.8,147.5 L1091.8,147.5 L1091.8,131.8M1086.8,147.5 L1086.4,148.8M1091.8,147.5 L1093.5,148.8" fill="none" stroke="#1c1c30" stroke-width="0.85" stroke-linejoin="round"/>
<text x="0" y="0" font-family="Liberation Sans" font-size="5.6" fill="#3a3a4c" transform="translate(1085.0,107.6) rotate(34)">TOP</text>
<text x="0" y="0" font-family="Liberation Sans" font-size="4.9" fill="#9090a4" transform="translate(1068.9,126.4) rotate(30)">FRONT</text>
<text x="0" y="0" font-family="Liberation Sans" font-size="5.3" fill="#3a3a4c" transform="translate(1094.9,139.9) rotate(-25)">RIGHT</text>
<path d="M1062.8,115.5V138" stroke="#1a1ad8" stroke-width="1.1"/>
<path d="M1062.8,138.2L1082.3,153.2" stroke="#a81e3a" stroke-width="1.3"/>
<path d="M1063,137.8L1068.8,133.8" stroke="#3cb04c" stroke-width="1.2"/>
<path d="M1114.5,448.5V438" stroke="#6a7ab8" stroke-width="1"/><path d="M1114.5,436l-1.6,5h3.2z" fill="#2a2aa8"/>
<path d="M1114.5,448.5L1122.5,443.5" stroke="#52a852" stroke-width="1"/>
<path d="M1114.5,448.5L1122,454.5" stroke="#c02a3a" stroke-width="1.2"/><path d="M1124,455.5l-4.5,-0.5l2,-2.8z" fill="#c02a3a"/>
<text x="1115" y="435.5" font-family="Liberation Sans" font-weight="bold" font-size="5.5" fill="#1c1c30">Z</text>
<text x="1123.8" y="443" font-family="Liberation Sans" font-weight="bold" font-size="5" fill="#1c1c30">Y</text>
<text x="1125" y="456.5" font-family="Liberation Sans" font-weight="bold" font-size="5.3" fill="#1c1c30">X</text>
</svg>
<div class="a" style="left:297px;top:468px;width:75.5px;height:17px;background:#e3e3e3;border:1px solid #d2d2d2"></div>
<div class="a" style="left:372.5px;top:468px;width:80px;height:17.5px;background:#fff;border:1px solid #d2d2d2;border-bottom:none"></div>
<svg style="left:303px;top:471px" width="10" height="10" viewBox="0 0 10 10"><path d="M0.5,0.5h4.5v1.8h-2.5v1.7h2v1.5h-2v4h-2z" fill="#c5202a"/><circle cx="6.5" cy="6.3" r="2.5" fill="#3a63ad"/><circle cx="6.5" cy="6.3" r="0.9" fill="#dfe7f4"/></svg>
<div class="t" style="left:315.8px;top:472.7px;font-size:7.4px;color:#1e1e1e;font-weight:normal;">Start page</div>
<svg style="left:354.5px;top:473px" width="7" height="7" viewBox="0 0 7 7"><path d="M1,1l5,5M6,1l-5,5" stroke="#111" stroke-width="1.3"/></svg>
<svg style="left:379px;top:471.5px" width="10" height="10" viewBox="0 0 10 10"><path d="M0.5,0.5h4.5v1.8h-2.5v1.7h2v1.5h-2v4h-2z" fill="#c5202a"/><circle cx="6.5" cy="6.3" r="2.5" fill="#3a63ad"/><circle cx="6.5" cy="6.3" r="0.9" fill="#dfe7f4"/></svg>
<div class="t" style="left:391px;top:473.1px;font-size:7.4px;color:#1e1e1e;font-weight:normal;">cable_tag : 1</div>
<svg style="left:436px;top:473.5px" width="7" height="7" viewBox="0 0 7 7"><path d="M1,1l5,5M6,1l-5,5" stroke="#111" stroke-width="1.3"/></svg>
<div class="t" style="left:2.6px;top:491.5px;font-size:7.4px;color:#1e1e1e;font-weight:normal;">Report view</div>
<svg style="left:1118px;top:492px" width="16" height="8" viewBox="0 0 16 8"><rect x="0.5" y="0.5" width="6.5" height="6.8" rx="1.5" fill="#b3b3b3" stroke="#9c9c9c" stroke-width="0.6"/><path d="M2,5l1.5,-1.5M3.5,5.5h2.5" stroke="#f4f4f4" stroke-width="0.8" fill="none"/><rect x="8.5" y="0.5" width="6.5" height="6.8" rx="1.5" fill="#b3b3b3" stroke="#9c9c9c" stroke-width="0.6"/><path d="M10.3,2.3l3,3M13.3,2.3l-3,3" stroke="#2a2a2a" stroke-width="0.9"/></svg>
<div class="a" style="left:0px;top:501px;width:1134px;height:106px;background:#fff;border-top:1px solid #cdcdcd;border-bottom:1px solid #d8d8d8;border-right:1px solid #d0d0d0"></div>
<div class="t" style="left:3px;top:505.6px;font-size:8px;color:#e6a817;font-weight:normal;">22:17:02  2.172402 &lt;asm3.main&gt; init_gui.py(14): no solver backend found</div>
<div class="t" style="left:3px;top:515.8px;font-size:8px;color:#e6a817;font-weight:normal;">22:17:05  The `.FCStd#` backup format is deprecated as of v0.21 and may be removed in future versions.</div>
<div class="t" style="left:3px;top:526.0px;font-size:8px;color:#e6a817;font-weight:normal;">To update, check the 'Preferences-&gt;General-&gt;Document-&gt;Use date and FCBak extension' option.</div>
<div class="t" style="left:1.4px;top:612.2px;font-size:7.3px;color:#1e1e1e;font-weight:normal;">Preselected: cable_tag.Body.Pad002.Face4 (-12.225970 mm, -9.105191 mm, 0.000000 mm)</div>
<svg style="left:977px;top:612px" width="9" height="8" viewBox="0 0 9 8"><rect x="0.7" y="0.7" width="7" height="5.5" rx="1" fill="none" stroke="#333" stroke-width="0.9"/><path d="M1,6.5h6.5v1h-6.5z" fill="#333"/></svg>
<div class="t" style="left:987px;top:612.2px;font-size:7.3px;color:#1e1e1e;font-weight:normal;">Touchpad</div>
<svg style="left:1023.5px;top:616px" width="5" height="3" viewBox="0 0 5 3"><path d="M0.5,0.5h4l-2,2.3z" fill="#3b3b3b"/></svg>
<div class="t" style="left:1036px;top:612.2px;font-size:7.3px;color:#1e1e1e;font-weight:normal;">88.59 mm x 40.79 mm</div>
<svg style="left:1113px;top:616px" width="5" height="3" viewBox="0 0 5 3"><path d="M0.5,0.5h4l-2,2.3z" fill="#3b3b3b"/></svg>
</body></html>
